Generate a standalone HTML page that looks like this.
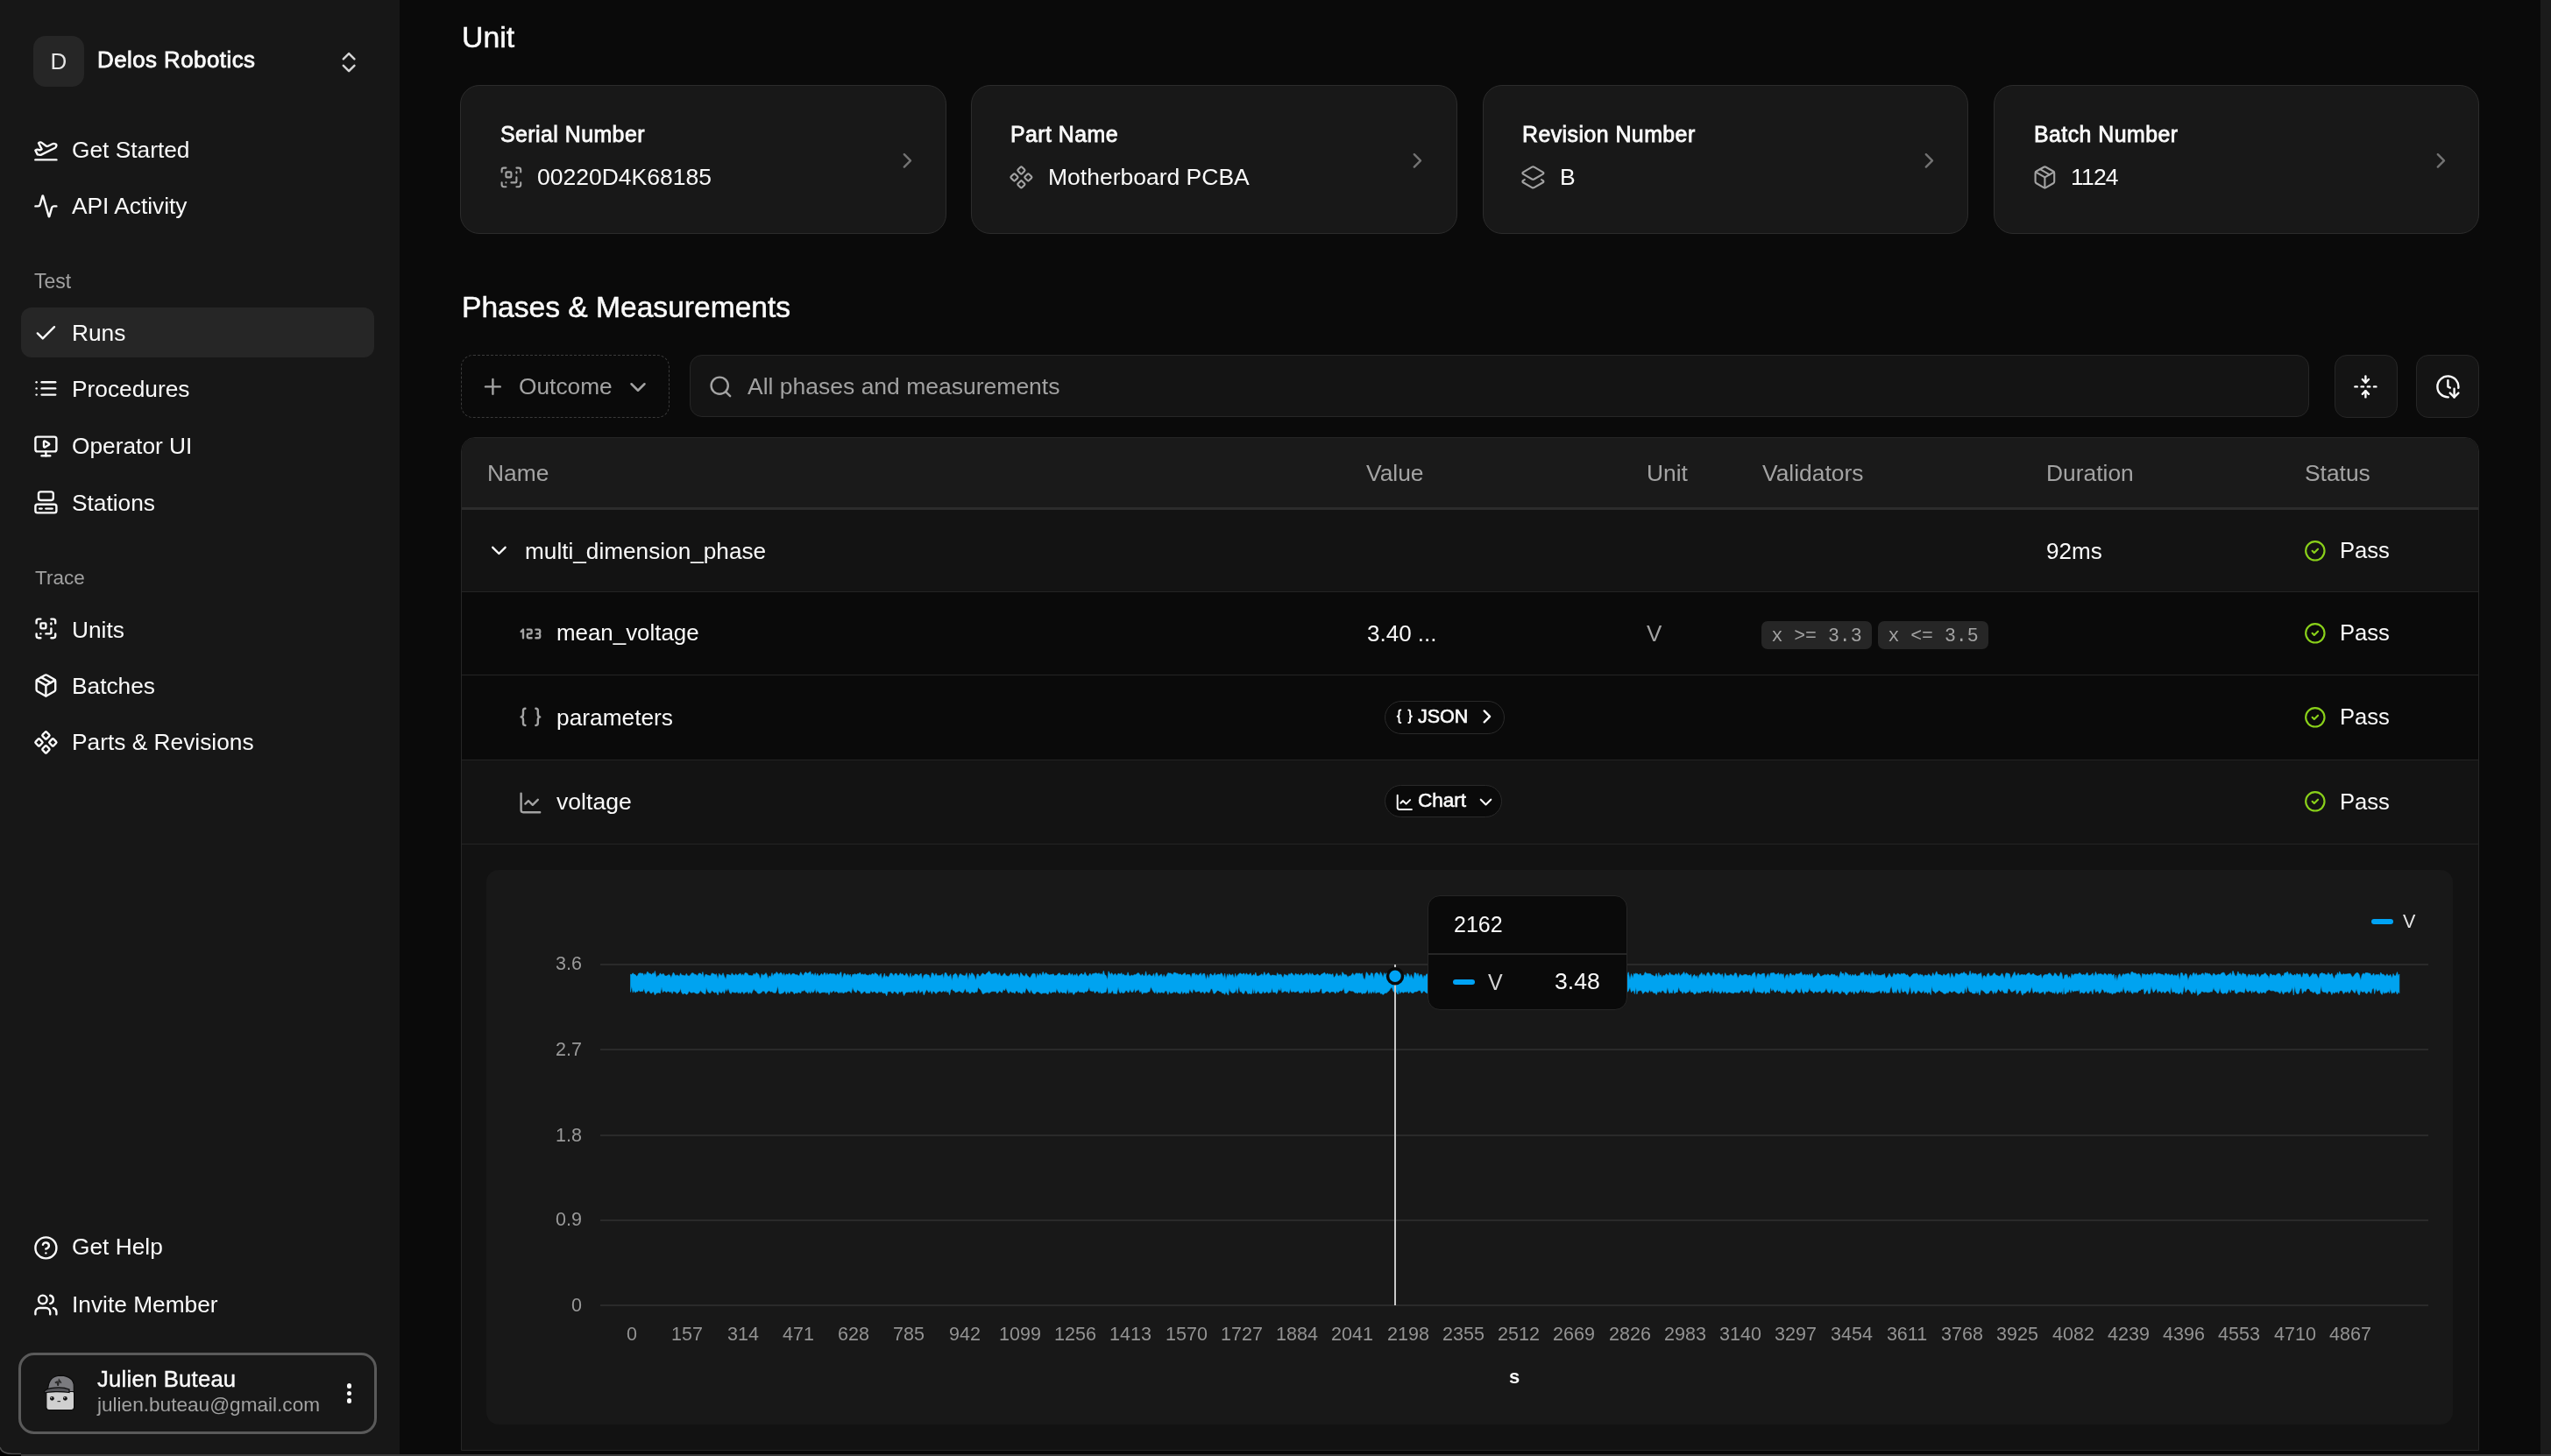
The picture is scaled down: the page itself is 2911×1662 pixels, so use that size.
<!DOCTYPE html><html><head><meta charset="utf-8"><style>
html,body{margin:0;padding:0;}
body{width:2911px;height:1662px;overflow:hidden;background:#0a0a0a;position:relative;font-family:"Liberation Sans", sans-serif;}
.t{position:absolute;white-space:nowrap;will-change:transform;}
.r{position:absolute;}
</style></head><body>
<div class="r" style="left:0.00px;top:0.00px;width:456.00px;height:1662.00px;background:#171717;border-radius:0px;box-sizing:border-box;"></div>
<div class="r" style="left:38.00px;top:41.00px;width:57.50px;height:57.50px;background:#262626;border-radius:14px;box-sizing:border-box;"></div>
<div class="t" style="left:-433.20px;width:1000px;text-align:center;top:56.89px;font-size:26px;line-height:26px;color:#e5e5e5;font-weight:400;letter-spacing:0px;font-family:'Liberation Sans', sans-serif;">D</div>
<div class="t" style="left:110.90px;top:56.38px;font-size:25.9px;line-height:25.9px;color:#fafafa;font-weight:400;letter-spacing:0.45px;font-family:'Liberation Sans', sans-serif;-webkit-text-stroke:0.8px #fafafa;">Delos Robotics</div>
<svg class="r" style="left:383.23px;top:55.63px;" width="30.24" height="30.24" viewBox="0 0 24 24" fill="none" stroke="#d4d4d4" stroke-width="2" stroke-linecap="round" stroke-linejoin="round"><path d="m7 15 5 5 5-5"/><path d="m7 9 5-5 5 5"/></svg>
<div class="t" style="left:81.90px;top:157.74px;font-size:26.3px;line-height:26.3px;color:#fafafa;font-weight:400;letter-spacing:0px;font-family:'Liberation Sans', sans-serif;">Get Started</div>
<svg class="r" style="left:38.10px;top:156.20px;" width="28.80" height="28.80" viewBox="0 0 24 24" fill="none" stroke="#fafafa" stroke-width="2" stroke-linecap="round" stroke-linejoin="round"><path d="M2 22h20"/><path d="M6.36 17.4 4 17l-2-4 1.1-.55a2 2 0 0 1 1.8 0l.17.1a2 2 0 0 0 1.8 0L8 12 5 6l.9-.45a2 2 0 0 1 2.09.2l4.02 3a2 2 0 0 0 2.1.2l4.19-2.06a2.41 2.41 0 0 1 1.73-.17L21 7a1.4 1.4 0 0 1 .87 1.99l-.38.76c-.23.46-.6.84-1.07 1.08L7.58 17.2a2 2 0 0 1-1.22.18Z"/></svg>
<div class="t" style="left:81.90px;top:222.34px;font-size:26.3px;line-height:26.3px;color:#fafafa;font-weight:400;letter-spacing:0px;font-family:'Liberation Sans', sans-serif;">API Activity</div>
<svg class="r" style="left:38.10px;top:221.25px;" width="28.80" height="28.80" viewBox="0 0 24 24" fill="none" stroke="#fafafa" stroke-width="2" stroke-linecap="round" stroke-linejoin="round"><path d="M22 12h-2.48a2 2 0 0 0-1.93 1.46l-2.35 8.36a.25.25 0 0 1-.48 0L9.24 2.18a.25.25 0 0 0-.48 0l-2.35 8.36A2 2 0 0 1 4.49 12H2"/></svg>
<div class="t" style="left:39.00px;top:310.33px;font-size:23px;line-height:23px;color:#a1a1a1;font-weight:400;letter-spacing:0px;font-family:'Liberation Sans', sans-serif;">Test</div>
<div class="r" style="left:24.00px;top:351.00px;width:403.00px;height:56.50px;background:#262626;border-radius:12px;box-sizing:border-box;"></div>
<div class="t" style="left:81.90px;top:366.54px;font-size:26.3px;line-height:26.3px;color:#fafafa;font-weight:400;letter-spacing:0px;font-family:'Liberation Sans', sans-serif;">Runs</div>
<svg class="r" style="left:38.10px;top:365.50px;" width="28.80" height="28.80" viewBox="0 0 24 24" fill="none" stroke="#fafafa" stroke-width="2" stroke-linecap="round" stroke-linejoin="round"><path d="M20 6 9 17l-5-5"/></svg>
<div class="t" style="left:81.90px;top:430.94px;font-size:26.3px;line-height:26.3px;color:#fafafa;font-weight:400;letter-spacing:0px;font-family:'Liberation Sans', sans-serif;">Procedures</div>
<svg class="r" style="left:38.10px;top:429.40px;" width="28.80" height="28.80" viewBox="0 0 24 24" fill="none" stroke="#fafafa" stroke-width="2" stroke-linecap="round" stroke-linejoin="round"><path d="M3 12h.01"/><path d="M3 18h.01"/><path d="M3 6h.01"/><path d="M8 12h13"/><path d="M8 18h13"/><path d="M8 6h13"/></svg>
<div class="t" style="left:81.90px;top:496.14px;font-size:26.3px;line-height:26.3px;color:#fafafa;font-weight:400;letter-spacing:0px;font-family:'Liberation Sans', sans-serif;">Operator UI</div>
<svg class="r" style="left:38.10px;top:494.90px;" width="28.80" height="28.80" viewBox="0 0 24 24" fill="none" stroke="#fafafa" stroke-width="2" stroke-linecap="round" stroke-linejoin="round"><path d="M10 7.75a.75.75 0 0 1 1.142-.638l3.664 2.249a.75.75 0 0 1 0 1.278l-3.664 2.25a.75.75 0 0 1-1.142-.64z"/><path d="M12 17v4"/><path d="M8 21h8"/><rect x="2" y="3" width="20" height="14" rx="2"/></svg>
<div class="t" style="left:81.90px;top:561.44px;font-size:26.3px;line-height:26.3px;color:#fafafa;font-weight:400;letter-spacing:0px;font-family:'Liberation Sans', sans-serif;">Stations</div>
<svg class="r" style="left:38.10px;top:559.15px;" width="28.80" height="28.80" viewBox="0 0 24 24" fill="none" stroke="#fafafa" stroke-width="2" stroke-linecap="round" stroke-linejoin="round"><rect width="14" height="8" x="5" y="2" rx="2"/><rect width="20" height="8" x="2" y="14" rx="2"/><path d="M6 18h2"/><path d="M12 18h6"/></svg>
<div class="t" style="left:39.50px;top:648.75px;font-size:22.5px;line-height:22.5px;color:#a1a1a1;font-weight:400;letter-spacing:0px;font-family:'Liberation Sans', sans-serif;">Trace</div>
<div class="t" style="left:81.90px;top:705.54px;font-size:26.3px;line-height:26.3px;color:#fafafa;font-weight:400;letter-spacing:0px;font-family:'Liberation Sans', sans-serif;">Units</div>
<svg class="r" style="left:38.10px;top:702.80px;" width="28.80" height="28.80" viewBox="0 0 24 24" fill="none" stroke="#fafafa" stroke-width="2" stroke-linecap="round" stroke-linejoin="round"><path d="M17 12v4a1 1 0 0 1-1 1h-4"/><path d="M17 3h2a2 2 0 0 1 2 2v2"/><path d="M17 8V7"/><path d="M21 17v2a2 2 0 0 1-2 2h-2"/><path d="M3 7V5a2 2 0 0 1 2-2h2"/><path d="M7 17h.01"/><path d="M7 21H5a2 2 0 0 1-2-2v-2"/><rect x="7" y="7" width="5" height="5" rx="1"/></svg>
<div class="t" style="left:81.90px;top:769.74px;font-size:26.3px;line-height:26.3px;color:#fafafa;font-weight:400;letter-spacing:0px;font-family:'Liberation Sans', sans-serif;">Batches</div>
<svg class="r" style="left:38.10px;top:767.90px;" width="28.80" height="28.80" viewBox="0 0 24 24" fill="none" stroke="#fafafa" stroke-width="2" stroke-linecap="round" stroke-linejoin="round"><path d="M11 21.73a2 2 0 0 0 2 0l7-4A2 2 0 0 0 21 16V8a2 2 0 0 0-1-1.73l-7-4a2 2 0 0 0-2 0l-7 4A2 2 0 0 0 3 8v8a2 2 0 0 0 1 1.73z"/><path d="M12 22V12"/><path d="M3.29 7 12 12l8.71-5"/><path d="m7.5 4.27 9 5.15"/></svg>
<div class="t" style="left:81.90px;top:834.34px;font-size:26.3px;line-height:26.3px;color:#fafafa;font-weight:400;letter-spacing:0px;font-family:'Liberation Sans', sans-serif;">Parts &amp; Revisions</div>
<svg class="r" style="left:38.10px;top:832.80px;" width="28.80" height="28.80" viewBox="0 0 24 24" fill="none" stroke="#fafafa" stroke-width="2" stroke-linecap="round" stroke-linejoin="round"><path d="M15.536 11.293a1 1 0 0 0 0 1.414l2.376 2.377a1 1 0 0 0 1.414 0l2.377-2.377a1 1 0 0 0 0-1.414l-2.377-2.377a1 1 0 0 0-1.414 0z"/><path d="M2.297 11.293a1 1 0 0 0 0 1.414l2.377 2.377a1 1 0 0 0 1.414 0l2.377-2.377a1 1 0 0 0 0-1.414L6.088 8.916a1 1 0 0 0-1.414 0z"/><path d="M8.916 17.912a1 1 0 0 0 0 1.415l2.377 2.376a1 1 0 0 0 1.414 0l2.377-2.376a1 1 0 0 0 0-1.415l-2.377-2.376a1 1 0 0 0-1.414 0z"/><path d="M8.916 4.674a1 1 0 0 0 0 1.414l2.377 2.376a1 1 0 0 0 1.414 0l2.377-2.376a1 1 0 0 0 0-1.414l-2.377-2.377a1 1 0 0 0-1.414 0z"/></svg>
<div class="t" style="left:81.90px;top:1410.24px;font-size:26.3px;line-height:26.3px;color:#fafafa;font-weight:400;letter-spacing:0px;font-family:'Liberation Sans', sans-serif;">Get Help</div>
<svg class="r" style="left:38.10px;top:1410.10px;" width="28.80" height="28.80" viewBox="0 0 24 24" fill="none" stroke="#fafafa" stroke-width="2" stroke-linecap="round" stroke-linejoin="round"><circle cx="12" cy="12" r="10"/><path d="M9.09 9a3 3 0 0 1 5.83 1c0 2-3 3-3 3"/><path d="M12 17h.01"/></svg>
<div class="t" style="left:81.90px;top:1475.54px;font-size:26.3px;line-height:26.3px;color:#fafafa;font-weight:400;letter-spacing:0px;font-family:'Liberation Sans', sans-serif;">Invite Member</div>
<svg class="r" style="left:38.10px;top:1475.10px;" width="28.80" height="28.80" viewBox="0 0 24 24" fill="none" stroke="#fafafa" stroke-width="2" stroke-linecap="round" stroke-linejoin="round"><path d="M16 21v-2a4 4 0 0 0-4-4H6a4 4 0 0 0-4 4v2"/><circle cx="9" cy="7" r="4"/><path d="M22 21v-2a4 4 0 0 0-3-3.87"/><path d="M16 3.13a4 4 0 0 1 0 7.75"/></svg>
<div class="r" style="left:21.00px;top:1544.00px;width:409.00px;height:92.50px;background:#171717;border-radius:18px;border:3.5px solid #5a5a5a;box-sizing:border-box;"></div>
<svg class="r" style="left:40px;top:1560px" width="60" height="60" viewBox="0 0 60 60">
<rect x="12.8" y="27.5" width="31.8" height="22" rx="3" fill="#d0d0d0" stroke="#0a0a0a" stroke-width="1.2"/>
<path d="M14.5 28.5 C14.5 15, 20 10.5, 29.5 10.2 C38.5 10.5, 44.3 15, 44.3 22 L44.3 28.5 Z" fill="#7b7b7f" stroke="#0a0a0a" stroke-width="1.2"/>
<path d="M10.5 28.3 C13 23.5, 31 22.5, 39 26 L39 29.5 C30 28, 16 28.3, 11 30 Z" fill="#56565a" stroke="#0a0a0a" stroke-width="1.2"/>
<path d="M22.8 18.5 l2.2 -1.2 l1.2 4.5 l1.2 -6.5 l2.4 3.5" stroke="#2a2a2a" stroke-width="1.6" fill="none"/>
<circle cx="19.4" cy="36.3" r="2.4" fill="#111"/><circle cx="34.4" cy="36.3" r="2.4" fill="#111"/>
<circle cx="18.8" cy="35.6" r="0.7" fill="#eee"/><circle cx="33.8" cy="35.6" r="0.7" fill="#eee"/>
<path d="M25.5 39.6h3.5" stroke="#333" stroke-width="1.2"/>
</svg>
<div class="t" style="left:111.00px;top:1561.93px;font-size:25.6px;line-height:25.6px;color:#fafafa;font-weight:400;letter-spacing:0.25px;font-family:'Liberation Sans', sans-serif;-webkit-text-stroke:0.4px #fafafa;">Julien Buteau</div>
<div class="t" style="left:111.00px;top:1593.37px;font-size:22.6px;line-height:22.6px;color:#a1a1a1;font-weight:400;letter-spacing:0px;font-family:'Liberation Sans', sans-serif;">julien.buteau@gmail.com</div>
<div class="r" style="left:395.50px;top:1579.40px;width:5.20px;height:5.20px;background:#fafafa;border-radius:3px;box-sizing:border-box;"></div>
<div class="r" style="left:395.50px;top:1587.90px;width:5.20px;height:5.20px;background:#fafafa;border-radius:3px;box-sizing:border-box;"></div>
<div class="r" style="left:395.50px;top:1596.40px;width:5.20px;height:5.20px;background:#fafafa;border-radius:3px;box-sizing:border-box;"></div>
<div class="r" style="left:2899.00px;top:0.00px;width:12.00px;height:1662.00px;background:#1b1b1b;border-radius:0px;box-sizing:border-box;"></div>
<div class="t" style="left:526.80px;top:26.29px;font-size:33.8px;line-height:33.8px;color:#fafafa;font-weight:400;letter-spacing:0px;font-family:'Liberation Sans', sans-serif;-webkit-text-stroke:0.5px #fafafa;">Unit</div>
<div class="r" style="left:525.40px;top:97.00px;width:554.60px;height:170.00px;background:#181818;border-radius:22px;border:1.2px solid #2c2c2c;box-sizing:border-box;"></div>
<div class="t" style="left:570.70px;top:141.42px;font-size:24.9px;line-height:24.9px;color:#fafafa;font-weight:400;letter-spacing:0.45px;font-family:'Liberation Sans', sans-serif;-webkit-text-stroke:0.8px #fafafa;">Serial Number</div>
<svg class="r" style="left:568.80px;top:187.80px;" width="28.80" height="28.80" viewBox="0 0 24 24" fill="none" stroke="#a3a3a3" stroke-width="1.75" stroke-linecap="round" stroke-linejoin="round"><path d="M17 12v4a1 1 0 0 1-1 1h-4"/><path d="M17 3h2a2 2 0 0 1 2 2v2"/><path d="M17 8V7"/><path d="M21 17v2a2 2 0 0 1-2 2h-2"/><path d="M3 7V5a2 2 0 0 1 2-2h2"/><path d="M7 17h.01"/><path d="M7 21H5a2 2 0 0 1-2-2v-2"/><rect x="7" y="7" width="5" height="5" rx="1"/></svg>
<div class="t" style="left:613.40px;top:188.87px;font-size:26.5px;line-height:26.5px;color:#fafafa;font-weight:400;letter-spacing:0px;font-family:'Liberation Sans', sans-serif;">00220D4K68185</div>
<svg class="r" style="left:1020.85px;top:168.60px;" width="28.80" height="28.80" viewBox="0 0 24 24" fill="none" stroke="#737373" stroke-width="2" stroke-linecap="round" stroke-linejoin="round"><path d="m9 18 6-6-6-6"/></svg>
<div class="r" style="left:1107.80px;top:97.00px;width:555.20px;height:170.00px;background:#181818;border-radius:22px;border:1.2px solid #2c2c2c;box-sizing:border-box;"></div>
<div class="t" style="left:1153.10px;top:141.42px;font-size:24.9px;line-height:24.9px;color:#fafafa;font-weight:400;letter-spacing:0.45px;font-family:'Liberation Sans', sans-serif;-webkit-text-stroke:0.8px #fafafa;">Part Name</div>
<svg class="r" style="left:1151.20px;top:187.80px;" width="28.80" height="28.80" viewBox="0 0 24 24" fill="none" stroke="#a3a3a3" stroke-width="1.75" stroke-linecap="round" stroke-linejoin="round"><path d="M15.536 11.293a1 1 0 0 0 0 1.414l2.376 2.377a1 1 0 0 0 1.414 0l2.377-2.377a1 1 0 0 0 0-1.414l-2.377-2.377a1 1 0 0 0-1.414 0z"/><path d="M2.297 11.293a1 1 0 0 0 0 1.414l2.377 2.377a1 1 0 0 0 1.414 0l2.377-2.377a1 1 0 0 0 0-1.414L6.088 8.916a1 1 0 0 0-1.414 0z"/><path d="M8.916 17.912a1 1 0 0 0 0 1.415l2.377 2.376a1 1 0 0 0 1.414 0l2.377-2.376a1 1 0 0 0 0-1.415l-2.377-2.376a1 1 0 0 0-1.414 0z"/><path d="M8.916 4.674a1 1 0 0 0 0 1.414l2.377 2.376a1 1 0 0 0 1.414 0l2.377-2.376a1 1 0 0 0 0-1.414l-2.377-2.377a1 1 0 0 0-1.414 0z"/></svg>
<div class="t" style="left:1195.80px;top:188.87px;font-size:26.5px;line-height:26.5px;color:#fafafa;font-weight:400;letter-spacing:0px;font-family:'Liberation Sans', sans-serif;">Motherboard PCBA</div>
<svg class="r" style="left:1603.25px;top:168.60px;" width="28.80" height="28.80" viewBox="0 0 24 24" fill="none" stroke="#737373" stroke-width="2" stroke-linecap="round" stroke-linejoin="round"><path d="m9 18 6-6-6-6"/></svg>
<div class="r" style="left:1692.00px;top:97.00px;width:553.50px;height:170.00px;background:#181818;border-radius:22px;border:1.2px solid #2c2c2c;box-sizing:border-box;"></div>
<div class="t" style="left:1737.30px;top:141.42px;font-size:24.9px;line-height:24.9px;color:#fafafa;font-weight:400;letter-spacing:0.45px;font-family:'Liberation Sans', sans-serif;-webkit-text-stroke:0.8px #fafafa;">Revision Number</div>
<svg class="r" style="left:1735.40px;top:187.80px;" width="28.80" height="28.80" viewBox="0 0 24 24" fill="none" stroke="#a3a3a3" stroke-width="1.75" stroke-linecap="round" stroke-linejoin="round"><path d="M13 13.74a2 2 0 0 1-2 0L2.5 8.87a1 1 0 0 1 0-1.74L11 2.26a2 2 0 0 1 2 0l8.5 4.87a1 1 0 0 1 0 1.74z"/><path d="m20 14.285 1.5.845a1 1 0 0 1 0 1.74L13 21.74a2 2 0 0 1-2 0l-8.5-4.87a1 1 0 0 1 0-1.74l1.5-.845"/></svg>
<div class="t" style="left:1780.00px;top:188.87px;font-size:26.5px;line-height:26.5px;color:#fafafa;font-weight:400;letter-spacing:0px;font-family:'Liberation Sans', sans-serif;">B</div>
<svg class="r" style="left:2187.45px;top:168.60px;" width="28.80" height="28.80" viewBox="0 0 24 24" fill="none" stroke="#737373" stroke-width="2" stroke-linecap="round" stroke-linejoin="round"><path d="m9 18 6-6-6-6"/></svg>
<div class="r" style="left:2275.30px;top:97.00px;width:553.30px;height:170.00px;background:#181818;border-radius:22px;border:1.2px solid #2c2c2c;box-sizing:border-box;"></div>
<div class="t" style="left:2320.60px;top:141.42px;font-size:24.9px;line-height:24.9px;color:#fafafa;font-weight:400;letter-spacing:0.45px;font-family:'Liberation Sans', sans-serif;-webkit-text-stroke:0.8px #fafafa;">Batch Number</div>
<svg class="r" style="left:2318.70px;top:187.80px;" width="28.80" height="28.80" viewBox="0 0 24 24" fill="none" stroke="#a3a3a3" stroke-width="1.75" stroke-linecap="round" stroke-linejoin="round"><path d="M11 21.73a2 2 0 0 0 2 0l7-4A2 2 0 0 0 21 16V8a2 2 0 0 0-1-1.73l-7-4a2 2 0 0 0-2 0l-7 4A2 2 0 0 0 3 8v8a2 2 0 0 0 1 1.73z"/><path d="M12 22V12"/><path d="M3.29 7 12 12l8.71-5"/><path d="m7.5 4.27 9 5.15"/></svg>
<div class="t" style="left:2363.30px;top:188.87px;font-size:26.5px;line-height:26.5px;color:#fafafa;font-weight:400;letter-spacing:-0.8px;font-family:'Liberation Sans', sans-serif;">1124</div>
<svg class="r" style="left:2770.75px;top:168.60px;" width="28.80" height="28.80" viewBox="0 0 24 24" fill="none" stroke="#737373" stroke-width="2" stroke-linecap="round" stroke-linejoin="round"><path d="m9 18 6-6-6-6"/></svg>
<div class="t" style="left:526.70px;top:334.26px;font-size:33.6px;line-height:33.6px;color:#fafafa;font-weight:400;letter-spacing:0px;font-family:'Liberation Sans', sans-serif;-webkit-text-stroke:0.5px #fafafa;">Phases &amp; Measurements</div>
<div class="r" style="left:525.70px;top:405.40px;width:238.60px;height:71.60px;background:#0a0a0a;border-radius:14px;border:1px dashed #3a3a3a;box-sizing:border-box;"></div>
<svg class="r" style="left:547.95px;top:427.30px;" width="28.80" height="28.80" viewBox="0 0 24 24" fill="none" stroke="#a3a3a3" stroke-width="2" stroke-linecap="round" stroke-linejoin="round"><path d="M5 12h14"/><path d="M12 5v14"/></svg>
<div class="t" style="left:591.90px;top:428.24px;font-size:26.3px;line-height:26.3px;color:#a3a3a3;font-weight:400;letter-spacing:0px;font-family:'Liberation Sans', sans-serif;">Outcome</div>
<svg class="r" style="left:713.45px;top:426.90px;" width="30.00" height="30.00" viewBox="0 0 24 24" fill="none" stroke="#a3a3a3" stroke-width="2" stroke-linecap="round" stroke-linejoin="round"><path d="m6 9 6 6 6-6"/></svg>
<div class="r" style="left:787.00px;top:405.40px;width:1847.50px;height:71.10px;background:#141414;border-radius:14px;border:1.5px solid #262626;box-sizing:border-box;"></div>
<svg class="r" style="left:807.95px;top:426.85px;" width="28.80" height="28.80" viewBox="0 0 24 24" fill="none" stroke="#a3a3a3" stroke-width="2" stroke-linecap="round" stroke-linejoin="round"><circle cx="11" cy="11" r="8"/><path d="m21 21-4.3-4.3"/></svg>
<div class="t" style="left:853.40px;top:428.07px;font-size:26.5px;line-height:26.5px;color:#a1a1a1;font-weight:400;letter-spacing:0px;font-family:'Liberation Sans', sans-serif;">All phases and measurements</div>
<div class="r" style="left:2664.30px;top:405.20px;width:71.30px;height:71.40px;background:#141414;border-radius:14px;border:1.5px solid #262626;box-sizing:border-box;"></div>
<div class="r" style="left:2757.30px;top:405.20px;width:71.30px;height:71.40px;background:#141414;border-radius:14px;border:1.5px solid #262626;box-sizing:border-box;"></div>
<svg class="r" style="left:2684.95px;top:426.95px;" width="28.80" height="28.80" viewBox="0 0 24 24" fill="none" stroke="#fafafa" stroke-width="2" stroke-linecap="round" stroke-linejoin="round"><path d="M12 22v-6"/><path d="M12 8V2"/><path d="M4 12H2"/><path d="M10 12H8"/><path d="M16 12h-2"/><path d="M22 12h-2"/><path d="m15 19-3-3-3 3"/><path d="m15 5-3 3-3-3"/></svg>
<svg class="r" style="left:2779.10px;top:427.00px;" width="28.80" height="28.80" viewBox="0 0 24 24" fill="none" stroke="#fafafa" stroke-width="2" stroke-linecap="round" stroke-linejoin="round"><path d="M12 6v6l2 1"/><path d="M12.337 21.994a10 10 0 1 1 9.588-8.767"/><path d="m14 18 4 4 4-4"/><path d="M18 14v8"/></svg>
<div class="r" style="left:525.50px;top:499.00px;width:2303.50px;height:1157.00px;background:#0a0a0a;border-radius:16px;border:1.5px solid #262626;box-sizing:border-box;border-bottom-left-radius:0;border-bottom-right-radius:0;overflow:hidden;"></div>
<div class="r" style="left:526.50px;top:500.00px;width:2301.50px;height:80.00px;background:#1a1a1a;border-radius:15px;box-sizing:border-box;border-bottom-left-radius:0;border-bottom-right-radius:0;"></div>
<div class="r" style="left:526.50px;top:579.30px;width:2301.50px;height:2.40px;background:#2c2c2c;border-radius:0px;box-sizing:border-box;"></div>
<div class="t" style="left:555.80px;top:526.65px;font-size:26.4px;line-height:26.4px;color:#a3a3a3;font-weight:400;letter-spacing:0px;font-family:'Liberation Sans', sans-serif;">Name</div>
<div class="t" style="left:1559.30px;top:526.65px;font-size:26.4px;line-height:26.4px;color:#a3a3a3;font-weight:400;letter-spacing:0px;font-family:'Liberation Sans', sans-serif;">Value</div>
<div class="t" style="left:1878.60px;top:526.65px;font-size:26.4px;line-height:26.4px;color:#a3a3a3;font-weight:400;letter-spacing:0px;font-family:'Liberation Sans', sans-serif;">Unit</div>
<div class="t" style="left:2011.30px;top:526.65px;font-size:26.4px;line-height:26.4px;color:#a3a3a3;font-weight:400;letter-spacing:0px;font-family:'Liberation Sans', sans-serif;">Validators</div>
<div class="t" style="left:2334.90px;top:526.65px;font-size:26.4px;line-height:26.4px;color:#a3a3a3;font-weight:400;letter-spacing:0px;font-family:'Liberation Sans', sans-serif;">Duration</div>
<div class="t" style="left:2630.20px;top:526.65px;font-size:26.4px;line-height:26.4px;color:#a3a3a3;font-weight:400;letter-spacing:0px;font-family:'Liberation Sans', sans-serif;">Status</div>
<div class="r" style="left:527.00px;top:581.70px;width:2300.50px;height:93.60px;background:#131313;border-radius:0px;box-sizing:border-box;"></div>
<div class="r" style="left:527.00px;top:675.30px;width:2300.50px;height:95.00px;background:#0a0a0a;border-radius:0px;box-sizing:border-box;"></div>
<div class="r" style="left:527.00px;top:770.30px;width:2300.50px;height:96.90px;background:#0a0a0a;border-radius:0px;box-sizing:border-box;"></div>
<div class="r" style="left:527.00px;top:867.20px;width:2300.50px;height:96.30px;background:#131313;border-radius:0px;box-sizing:border-box;"></div>
<div class="r" style="left:527.00px;top:963.50px;width:2300.50px;height:691.50px;background:#121212;border-radius:0px;box-sizing:border-box;"></div>
<div class="r" style="left:527.00px;top:674.80px;width:2300.50px;height:1.20px;background:#242424;border-radius:0px;box-sizing:border-box;"></div>
<div class="r" style="left:527.00px;top:769.80px;width:2300.50px;height:1.20px;background:#242424;border-radius:0px;box-sizing:border-box;"></div>
<div class="r" style="left:527.00px;top:866.70px;width:2300.50px;height:1.20px;background:#242424;border-radius:0px;box-sizing:border-box;"></div>
<div class="r" style="left:527.00px;top:963.00px;width:2300.50px;height:1.20px;background:#242424;border-radius:0px;box-sizing:border-box;"></div>
<svg class="r" style="left:555.05px;top:614.25px;" width="28.80" height="28.80" viewBox="0 0 24 24" fill="none" stroke="#fafafa" stroke-width="2" stroke-linecap="round" stroke-linejoin="round"><path d="m6 9 6 6 6-6"/></svg>
<div class="t" style="left:599.10px;top:615.92px;font-size:26.2px;line-height:26.2px;color:#fafafa;font-weight:400;letter-spacing:0px;font-family:'Liberation Sans', sans-serif;">multi_dimension_phase</div>
<div class="t" style="left:2334.90px;top:615.91px;font-size:26.1px;line-height:26.1px;color:#fafafa;font-weight:400;letter-spacing:0px;font-family:'Liberation Sans', sans-serif;">92ms</div>
<svg class="r" style="left:2628.66px;top:615.96px;" width="25.68" height="25.68" viewBox="0 0 24 24" fill="none" stroke="#8ad11a" stroke-width="2" stroke-linecap="round" stroke-linejoin="round"><circle cx="12" cy="12" r="10"/><path d="m9 12 2 2 4-4"/></svg>
<div class="t" style="left:2669.80px;top:616.43px;font-size:25.6px;line-height:25.6px;color:#fafafa;font-weight:400;letter-spacing:0px;font-family:'Liberation Sans', sans-serif;">Pass</div>
<svg class="r" style="left:591.15px;top:709.00px;" width="28.80" height="28.80" viewBox="0 0 24 24" fill="none" stroke="#a3a3a3" stroke-width="2" stroke-linecap="round" stroke-linejoin="round"><path d="M3 10l2 -2v8"/><path d="M9 8h3a1 1 0 0 1 1 1v2a1 1 0 0 1 -1 1h-2a1 1 0 0 0 -1 1v2a1 1 0 0 0 1 1h3"/><path d="M17 8h2.5a1.5 1.5 0 0 1 1.5 1.5v1a1.5 1.5 0 0 1 -1.5 1.5h-1.5h1.5a1.5 1.5 0 0 1 1.5 1.5v1a1.5 1.5 0 0 1 -1.5 1.5h-2.5"/></svg>
<div class="t" style="left:635.40px;top:710.08px;font-size:25.9px;line-height:25.9px;color:#fafafa;font-weight:400;letter-spacing:0px;font-family:'Liberation Sans', sans-serif;">mean_voltage</div>
<div class="t" style="left:1559.80px;top:710.09px;font-size:26px;line-height:26px;color:#fafafa;font-weight:400;letter-spacing:0px;font-family:'Liberation Sans', sans-serif;">3.40 ...</div>
<div class="t" style="left:1879.00px;top:710.09px;font-size:26px;line-height:26px;color:#a3a3a3;font-weight:400;letter-spacing:0px;font-family:'Liberation Sans', sans-serif;">V</div>
<div class="r" style="left:2009.80px;top:709.20px;width:126.00px;height:31.70px;background:#262626;border-radius:7px;box-sizing:border-box;"></div>
<div class="t" style="left:1572.80px;width:1000px;text-align:center;top:716.00px;font-size:21.5px;line-height:21.5px;color:#a3a3a3;font-weight:400;letter-spacing:0px;font-family:'Liberation Mono', monospace;">x &gt;= 3.3</div>
<div class="r" style="left:2143.00px;top:709.20px;width:125.80px;height:31.70px;background:#262626;border-radius:7px;box-sizing:border-box;"></div>
<div class="t" style="left:1705.90px;width:1000px;text-align:center;top:716.00px;font-size:21.5px;line-height:21.5px;color:#a3a3a3;font-weight:400;letter-spacing:0px;font-family:'Liberation Mono', monospace;">x &lt;= 3.5</div>
<svg class="r" style="left:2628.66px;top:709.96px;" width="25.68" height="25.68" viewBox="0 0 24 24" fill="none" stroke="#8ad11a" stroke-width="2" stroke-linecap="round" stroke-linejoin="round"><circle cx="12" cy="12" r="10"/><path d="m9 12 2 2 4-4"/></svg>
<div class="t" style="left:2669.80px;top:710.43px;font-size:25.6px;line-height:25.6px;color:#fafafa;font-weight:400;letter-spacing:0px;font-family:'Liberation Sans', sans-serif;">Pass</div>
<svg class="r" style="left:591.10px;top:804.10px;" width="28.80" height="28.80" viewBox="0 0 24 24" fill="none" stroke="#a3a3a3" stroke-width="2" stroke-linecap="round" stroke-linejoin="round"><path d="M7 4a2 2 0 0 0 -2 2v3a2 3 0 0 1 -2 3a2 3 0 0 1 2 3v3a2 2 0 0 0 2 2"/><path d="M17 4a2 2 0 0 1 2 2v3a2 3 0 0 0 2 3a2 3 0 0 0 -2 3v3a2 2 0 0 1 -2 2"/></svg>
<div class="t" style="left:635.40px;top:805.74px;font-size:26.3px;line-height:26.3px;color:#fafafa;font-weight:400;letter-spacing:0px;font-family:'Liberation Sans', sans-serif;">parameters</div>
<div class="r" style="left:1580.20px;top:800.10px;width:136.40px;height:37.70px;background:#0a0a0a;border-radius:19px;border:1.5px solid #2a2a2a;box-sizing:border-box;"></div>
<svg class="r" style="left:1592.10px;top:807.20px;" width="21.60" height="21.60" viewBox="0 0 24 24" fill="none" stroke="#fafafa" stroke-width="2.2" stroke-linecap="round" stroke-linejoin="round"><path d="M7 4a2 2 0 0 0 -2 2v3a2 3 0 0 1 -2 3a2 3 0 0 1 2 3v3a2 2 0 0 0 2 2"/><path d="M17 4a2 2 0 0 1 2 2v3a2 3 0 0 0 2 3a2 3 0 0 0 -2 3v3a2 2 0 0 1 -2 2"/></svg>
<div class="t" style="left:1618.40px;top:807.60px;font-size:21.5px;line-height:21.5px;color:#fafafa;font-weight:400;letter-spacing:0px;font-family:'Liberation Sans', sans-serif;-webkit-text-stroke:0.6px #fafafa;">JSON</div>
<svg class="r" style="left:1683.80px;top:805.10px;" width="25.80" height="25.80" viewBox="0 0 24 24" fill="none" stroke="#fafafa" stroke-width="2.2" stroke-linecap="round" stroke-linejoin="round"><path d="m9 18 6-6-6-6"/></svg>
<svg class="r" style="left:2628.66px;top:805.96px;" width="25.68" height="25.68" viewBox="0 0 24 24" fill="none" stroke="#8ad11a" stroke-width="2" stroke-linecap="round" stroke-linejoin="round"><circle cx="12" cy="12" r="10"/><path d="m9 12 2 2 4-4"/></svg>
<div class="t" style="left:2669.80px;top:806.33px;font-size:25.6px;line-height:25.6px;color:#fafafa;font-weight:400;letter-spacing:0px;font-family:'Liberation Sans', sans-serif;">Pass</div>
<svg class="r" style="left:590.80px;top:901.60px;" width="28.80" height="28.80" viewBox="0 0 24 24" fill="none" stroke="#a3a3a3" stroke-width="2" stroke-linecap="round" stroke-linejoin="round"><path d="M3 3v16a2 2 0 0 0 2 2h16"/><path d="m19 9-5 5-4-4-3 3"/></svg>
<div class="t" style="left:635.40px;top:901.88px;font-size:26.6px;line-height:26.6px;color:#fafafa;font-weight:400;letter-spacing:0px;font-family:'Liberation Sans', sans-serif;">voltage</div>
<div class="r" style="left:1580.20px;top:895.80px;width:134.20px;height:37.60px;background:#0a0a0a;border-radius:19px;border:1.5px solid #2a2a2a;box-sizing:border-box;"></div>
<svg class="r" style="left:1591.80px;top:905.20px;" width="21.60" height="21.60" viewBox="0 0 24 24" fill="none" stroke="#fafafa" stroke-width="2.2" stroke-linecap="round" stroke-linejoin="round"><path d="M3 3v16a2 2 0 0 0 2 2h16"/><path d="m19 9-5 5-4-4-3 3"/></svg>
<div class="t" style="left:1617.80px;top:903.35px;font-size:22.5px;line-height:22.5px;color:#fafafa;font-weight:400;letter-spacing:0px;font-family:'Liberation Sans', sans-serif;-webkit-text-stroke:0.6px #fafafa;">Chart</div>
<svg class="r" style="left:1683.58px;top:904.48px;" width="23.04" height="23.04" viewBox="0 0 24 24" fill="none" stroke="#fafafa" stroke-width="2.2" stroke-linecap="round" stroke-linejoin="round"><path d="m6 9 6 6 6-6"/></svg>
<svg class="r" style="left:2628.66px;top:901.96px;" width="25.68" height="25.68" viewBox="0 0 24 24" fill="none" stroke="#8ad11a" stroke-width="2" stroke-linecap="round" stroke-linejoin="round"><circle cx="12" cy="12" r="10"/><path d="m9 12 2 2 4-4"/></svg>
<div class="t" style="left:2669.80px;top:902.73px;font-size:25.6px;line-height:25.6px;color:#fafafa;font-weight:400;letter-spacing:0px;font-family:'Liberation Sans', sans-serif;">Pass</div>
<div class="r" style="left:555.40px;top:993.00px;width:2243.60px;height:633.00px;background:#181818;border-radius:14px;box-sizing:border-box;"></div>
<div class="r" style="left:685.00px;top:1100.00px;width:2085.50px;height:2.00px;background:#2a2a2a;border-radius:0px;box-sizing:border-box;"></div>
<div class="t" style="right:2247.00px;top:1090.40px;font-size:21.5px;line-height:21.5px;color:#9a9a9a;font-weight:400;letter-spacing:0px;font-family:'Liberation Sans', sans-serif;">3.6</div>
<div class="r" style="left:685.00px;top:1197.20px;width:2085.50px;height:2.00px;background:#2a2a2a;border-radius:0px;box-sizing:border-box;"></div>
<div class="t" style="right:2247.00px;top:1187.80px;font-size:21.5px;line-height:21.5px;color:#9a9a9a;font-weight:400;letter-spacing:0px;font-family:'Liberation Sans', sans-serif;">2.7</div>
<div class="r" style="left:685.00px;top:1294.90px;width:2085.50px;height:2.00px;background:#2a2a2a;border-radius:0px;box-sizing:border-box;"></div>
<div class="t" style="right:2247.00px;top:1285.60px;font-size:21.5px;line-height:21.5px;color:#9a9a9a;font-weight:400;letter-spacing:0px;font-family:'Liberation Sans', sans-serif;">1.8</div>
<div class="r" style="left:685.00px;top:1391.90px;width:2085.50px;height:2.00px;background:#2a2a2a;border-radius:0px;box-sizing:border-box;"></div>
<div class="t" style="right:2247.00px;top:1381.80px;font-size:21.5px;line-height:21.5px;color:#9a9a9a;font-weight:400;letter-spacing:0px;font-family:'Liberation Sans', sans-serif;">0.9</div>
<div class="r" style="left:685.00px;top:1489.00px;width:2085.50px;height:2.00px;background:#2a2a2a;border-radius:0px;box-sizing:border-box;"></div>
<div class="t" style="right:2247.00px;top:1479.50px;font-size:21.5px;line-height:21.5px;color:#9a9a9a;font-weight:400;letter-spacing:0px;font-family:'Liberation Sans', sans-serif;">0</div>
<div class="t" style="left:221.00px;width:1000px;text-align:center;top:1512.80px;font-size:21.5px;line-height:21.5px;color:#939393;font-weight:400;letter-spacing:0px;font-family:'Liberation Sans', sans-serif;">0</div>
<div class="t" style="left:284.25px;width:1000px;text-align:center;top:1512.80px;font-size:21.5px;line-height:21.5px;color:#939393;font-weight:400;letter-spacing:0px;font-family:'Liberation Sans', sans-serif;">157</div>
<div class="t" style="left:347.50px;width:1000px;text-align:center;top:1512.80px;font-size:21.5px;line-height:21.5px;color:#939393;font-weight:400;letter-spacing:0px;font-family:'Liberation Sans', sans-serif;">314</div>
<div class="t" style="left:410.75px;width:1000px;text-align:center;top:1512.80px;font-size:21.5px;line-height:21.5px;color:#939393;font-weight:400;letter-spacing:0px;font-family:'Liberation Sans', sans-serif;">471</div>
<div class="t" style="left:474.00px;width:1000px;text-align:center;top:1512.80px;font-size:21.5px;line-height:21.5px;color:#939393;font-weight:400;letter-spacing:0px;font-family:'Liberation Sans', sans-serif;">628</div>
<div class="t" style="left:537.25px;width:1000px;text-align:center;top:1512.80px;font-size:21.5px;line-height:21.5px;color:#939393;font-weight:400;letter-spacing:0px;font-family:'Liberation Sans', sans-serif;">785</div>
<div class="t" style="left:600.50px;width:1000px;text-align:center;top:1512.80px;font-size:21.5px;line-height:21.5px;color:#939393;font-weight:400;letter-spacing:0px;font-family:'Liberation Sans', sans-serif;">942</div>
<div class="t" style="left:663.75px;width:1000px;text-align:center;top:1512.80px;font-size:21.5px;line-height:21.5px;color:#939393;font-weight:400;letter-spacing:0px;font-family:'Liberation Sans', sans-serif;">1099</div>
<div class="t" style="left:727.00px;width:1000px;text-align:center;top:1512.80px;font-size:21.5px;line-height:21.5px;color:#939393;font-weight:400;letter-spacing:0px;font-family:'Liberation Sans', sans-serif;">1256</div>
<div class="t" style="left:790.25px;width:1000px;text-align:center;top:1512.80px;font-size:21.5px;line-height:21.5px;color:#939393;font-weight:400;letter-spacing:0px;font-family:'Liberation Sans', sans-serif;">1413</div>
<div class="t" style="left:853.50px;width:1000px;text-align:center;top:1512.80px;font-size:21.5px;line-height:21.5px;color:#939393;font-weight:400;letter-spacing:0px;font-family:'Liberation Sans', sans-serif;">1570</div>
<div class="t" style="left:916.75px;width:1000px;text-align:center;top:1512.80px;font-size:21.5px;line-height:21.5px;color:#939393;font-weight:400;letter-spacing:0px;font-family:'Liberation Sans', sans-serif;">1727</div>
<div class="t" style="left:980.00px;width:1000px;text-align:center;top:1512.80px;font-size:21.5px;line-height:21.5px;color:#939393;font-weight:400;letter-spacing:0px;font-family:'Liberation Sans', sans-serif;">1884</div>
<div class="t" style="left:1043.25px;width:1000px;text-align:center;top:1512.80px;font-size:21.5px;line-height:21.5px;color:#939393;font-weight:400;letter-spacing:0px;font-family:'Liberation Sans', sans-serif;">2041</div>
<div class="t" style="left:1106.50px;width:1000px;text-align:center;top:1512.80px;font-size:21.5px;line-height:21.5px;color:#939393;font-weight:400;letter-spacing:0px;font-family:'Liberation Sans', sans-serif;">2198</div>
<div class="t" style="left:1169.75px;width:1000px;text-align:center;top:1512.80px;font-size:21.5px;line-height:21.5px;color:#939393;font-weight:400;letter-spacing:0px;font-family:'Liberation Sans', sans-serif;">2355</div>
<div class="t" style="left:1233.00px;width:1000px;text-align:center;top:1512.80px;font-size:21.5px;line-height:21.5px;color:#939393;font-weight:400;letter-spacing:0px;font-family:'Liberation Sans', sans-serif;">2512</div>
<div class="t" style="left:1296.25px;width:1000px;text-align:center;top:1512.80px;font-size:21.5px;line-height:21.5px;color:#939393;font-weight:400;letter-spacing:0px;font-family:'Liberation Sans', sans-serif;">2669</div>
<div class="t" style="left:1359.50px;width:1000px;text-align:center;top:1512.80px;font-size:21.5px;line-height:21.5px;color:#939393;font-weight:400;letter-spacing:0px;font-family:'Liberation Sans', sans-serif;">2826</div>
<div class="t" style="left:1422.75px;width:1000px;text-align:center;top:1512.80px;font-size:21.5px;line-height:21.5px;color:#939393;font-weight:400;letter-spacing:0px;font-family:'Liberation Sans', sans-serif;">2983</div>
<div class="t" style="left:1486.00px;width:1000px;text-align:center;top:1512.80px;font-size:21.5px;line-height:21.5px;color:#939393;font-weight:400;letter-spacing:0px;font-family:'Liberation Sans', sans-serif;">3140</div>
<div class="t" style="left:1549.25px;width:1000px;text-align:center;top:1512.80px;font-size:21.5px;line-height:21.5px;color:#939393;font-weight:400;letter-spacing:0px;font-family:'Liberation Sans', sans-serif;">3297</div>
<div class="t" style="left:1612.50px;width:1000px;text-align:center;top:1512.80px;font-size:21.5px;line-height:21.5px;color:#939393;font-weight:400;letter-spacing:0px;font-family:'Liberation Sans', sans-serif;">3454</div>
<div class="t" style="left:1675.75px;width:1000px;text-align:center;top:1512.80px;font-size:21.5px;line-height:21.5px;color:#939393;font-weight:400;letter-spacing:0px;font-family:'Liberation Sans', sans-serif;">3611</div>
<div class="t" style="left:1739.00px;width:1000px;text-align:center;top:1512.80px;font-size:21.5px;line-height:21.5px;color:#939393;font-weight:400;letter-spacing:0px;font-family:'Liberation Sans', sans-serif;">3768</div>
<div class="t" style="left:1802.25px;width:1000px;text-align:center;top:1512.80px;font-size:21.5px;line-height:21.5px;color:#939393;font-weight:400;letter-spacing:0px;font-family:'Liberation Sans', sans-serif;">3925</div>
<div class="t" style="left:1865.50px;width:1000px;text-align:center;top:1512.80px;font-size:21.5px;line-height:21.5px;color:#939393;font-weight:400;letter-spacing:0px;font-family:'Liberation Sans', sans-serif;">4082</div>
<div class="t" style="left:1928.75px;width:1000px;text-align:center;top:1512.80px;font-size:21.5px;line-height:21.5px;color:#939393;font-weight:400;letter-spacing:0px;font-family:'Liberation Sans', sans-serif;">4239</div>
<div class="t" style="left:1992.00px;width:1000px;text-align:center;top:1512.80px;font-size:21.5px;line-height:21.5px;color:#939393;font-weight:400;letter-spacing:0px;font-family:'Liberation Sans', sans-serif;">4396</div>
<div class="t" style="left:2055.25px;width:1000px;text-align:center;top:1512.80px;font-size:21.5px;line-height:21.5px;color:#939393;font-weight:400;letter-spacing:0px;font-family:'Liberation Sans', sans-serif;">4553</div>
<div class="t" style="left:2118.50px;width:1000px;text-align:center;top:1512.80px;font-size:21.5px;line-height:21.5px;color:#939393;font-weight:400;letter-spacing:0px;font-family:'Liberation Sans', sans-serif;">4710</div>
<div class="t" style="left:2181.75px;width:1000px;text-align:center;top:1512.80px;font-size:21.5px;line-height:21.5px;color:#939393;font-weight:400;letter-spacing:0px;font-family:'Liberation Sans', sans-serif;">4867</div>
<div class="t" style="left:1227.80px;width:1000px;text-align:center;top:1561.38px;font-size:22px;line-height:22px;color:#fafafa;font-weight:700;letter-spacing:0px;font-family:'Liberation Sans', sans-serif;">s</div>
<div class="r" style="left:2706.00px;top:1049.30px;width:25.00px;height:6.00px;background:#00a3f5;border-radius:3px;box-sizing:border-box;"></div>
<div class="t" style="left:2742.00px;top:1041.50px;font-size:21.5px;line-height:21.5px;color:#e5e5e5;font-weight:400;letter-spacing:0px;font-family:'Liberation Sans', sans-serif;">V</div>
<svg class="r" style="left:0;top:0" width="2911" height="1662"><polygon points="719.5,1112.3 720.6,1112.5 722.2,1110.7 723.2,1112.1 724.9,1112.6 726.7,1114.5 727.7,1113.6 728.7,1111.3 730.4,1110.7 732.0,1111.2 733.5,1111.0 734.8,1114.0 735.9,1111.5 737.1,1112.9 738.8,1109.0 740.6,1111.3 742.3,1111.5 743.5,1112.8 745.2,1110.6 746.3,1111.9 747.4,1108.4 749.0,1116.0 750.6,1113.7 751.9,1113.7 753.4,1110.8 755.0,1112.8 756.4,1111.4 757.4,1111.7 758.7,1114.1 760.5,1114.0 762.1,1113.3 763.3,1112.2 764.7,1113.5 765.7,1116.4 767.1,1113.0 768.4,1110.0 770.0,1112.6 771.1,1114.2 772.4,1112.8 773.5,1113.4 775.3,1114.4 776.6,1110.8 777.6,1112.9 779.3,1113.3 780.5,1113.4 781.9,1113.9 783.3,1111.3 784.6,1113.7 786.4,1114.2 788.1,1112.4 789.7,1110.6 791.2,1110.9 792.7,1112.2 794.2,1112.6 795.8,1114.1 797.5,1111.0 799.2,1111.0 800.9,1113.1 801.9,1109.5 803.6,1116.7 804.9,1112.4 806.0,1112.3 807.7,1113.3 809.5,1113.7 810.8,1114.1 812.4,1110.8 813.9,1111.4 815.3,1112.1 816.3,1113.0 817.4,1111.5 819.2,1117.4 820.6,1111.2 822.0,1112.9 823.5,1113.7 825.1,1110.7 826.5,1114.4 828.3,1118.3 829.4,1112.3 831.0,1112.6 832.7,1113.0 834.2,1113.5 835.2,1110.7 836.7,1112.7 838.3,1113.6 839.7,1111.5 841.1,1113.5 842.6,1112.4 843.6,1111.7 844.9,1111.0 846.3,1113.7 847.5,1111.9 848.9,1113.7 850.1,1110.6 851.8,1110.8 852.9,1111.2 854.3,1113.6 855.7,1113.4 857.4,1113.7 859.0,1113.7 860.3,1111.2 861.3,1113.1 863.1,1110.2 864.3,1111.2 865.9,1112.4 867.7,1118.2 869.1,1111.6 870.7,1113.4 872.4,1112.6 874.0,1110.5 875.1,1112.4 876.7,1117.5 877.9,1113.8 879.4,1115.5 881.0,1110.5 882.0,1114.5 883.4,1111.7 885.0,1111.8 886.1,1109.4 887.5,1110.9 888.9,1112.5 890.2,1110.6 891.7,1110.6 893.3,1113.8 894.6,1110.7 895.8,1114.3 897.3,1111.8 899.0,1112.7 900.7,1110.8 902.4,1113.4 903.9,1111.7 904.9,1111.3 906.3,1111.6 908.1,1112.9 909.7,1112.4 911.1,1114.1 912.2,1113.4 913.7,1109.7 914.9,1111.7 916.4,1114.0 918.1,1110.9 919.3,1109.6 920.4,1110.6 921.8,1111.3 923.0,1110.2 924.8,1108.9 925.9,1113.3 927.4,1111.3 929.0,1114.0 930.2,1110.6 931.4,1114.6 932.8,1111.2 934.2,1114.2 935.7,1113.6 937.4,1111.2 939.1,1113.6 940.5,1110.6 941.6,1110.6 942.6,1114.1 943.9,1110.7 945.0,1113.1 946.0,1112.1 947.8,1111.1 948.9,1112.1 950.5,1111.4 951.8,1111.8 952.8,1111.9 954.1,1113.9 955.6,1111.2 957.4,1113.2 958.6,1110.6 959.8,1109.6 960.8,1117.3 961.9,1114.7 963.3,1111.0 964.5,1111.6 965.7,1114.0 967.5,1111.7 969.3,1114.0 970.3,1112.0 971.4,1116.5 972.9,1112.3 974.3,1112.4 975.8,1111.5 977.1,1112.8 978.4,1111.6 979.8,1111.7 981.4,1110.1 982.8,1113.0 984.5,1111.8 985.6,1113.0 987.1,1111.4 988.1,1112.8 989.8,1113.3 991.0,1113.4 992.5,1112.2 993.8,1113.2 995.6,1111.0 997.3,1112.9 998.4,1110.5 1000.1,1111.6 1001.7,1112.7 1003.1,1115.2 1004.2,1112.4 1005.3,1111.2 1006.6,1117.9 1008.4,1114.0 1009.4,1111.0 1010.4,1115.4 1011.7,1113.7 1013.3,1115.8 1014.8,1113.7 1016.1,1110.9 1017.6,1110.9 1018.9,1112.6 1020.0,1114.5 1021.1,1111.6 1022.9,1111.1 1024.6,1113.9 1026.0,1113.2 1027.4,1110.6 1028.5,1112.4 1029.8,1111.5 1031.6,1113.8 1032.8,1113.7 1034.3,1110.8 1036.0,1113.6 1037.3,1116.7 1039.0,1110.8 1040.1,1116.5 1041.6,1113.3 1042.7,1114.3 1044.3,1111.9 1046.0,1112.1 1047.1,1112.8 1048.5,1114.2 1049.7,1112.3 1051.1,1111.0 1052.7,1118.4 1054.3,1113.2 1055.6,1112.4 1057.4,1112.1 1058.7,1113.1 1060.0,1113.1 1061.7,1117.3 1063.4,1110.6 1064.8,1111.0 1066.4,1114.4 1068.1,1110.9 1069.6,1114.0 1071.2,1113.6 1072.9,1113.7 1074.2,1113.1 1075.6,1111.7 1076.8,1117.6 1078.2,1110.5 1079.6,1110.5 1080.8,1112.9 1082.2,1114.9 1083.6,1113.9 1084.8,1111.8 1086.3,1119.9 1087.6,1113.2 1089.2,1112.0 1090.3,1111.0 1092.0,1112.7 1093.1,1117.7 1094.5,1113.3 1096.0,1111.3 1097.3,1112.8 1098.6,1113.3 1099.6,1113.8 1101.4,1114.1 1103.1,1110.6 1104.9,1118.7 1106.3,1111.0 1107.6,1114.3 1108.8,1110.6 1110.2,1111.6 1111.9,1113.9 1113.6,1119.3 1115.0,1112.0 1116.2,1111.9 1117.3,1114.5 1118.7,1114.4 1119.9,1112.6 1121.3,1110.8 1122.5,1111.8 1124.2,1113.0 1126.0,1110.8 1127.0,1110.6 1128.6,1108.5 1129.9,1110.6 1131.4,1112.3 1133.1,1111.8 1134.8,1111.2 1136.4,1110.8 1137.7,1111.9 1139.0,1113.7 1140.6,1110.6 1141.8,1114.0 1143.4,1114.3 1145.1,1112.3 1146.4,1110.7 1147.8,1113.5 1149.5,1114.2 1151.1,1114.4 1152.8,1112.5 1154.0,1110.6 1155.2,1113.6 1156.7,1111.8 1158.0,1111.8 1159.2,1112.5 1160.6,1111.1 1162.1,1112.5 1163.5,1117.0 1164.8,1110.3 1166.5,1112.5 1167.7,1113.9 1169.4,1114.4 1171.0,1111.2 1172.3,1113.7 1173.4,1114.4 1175.1,1116.6 1176.6,1114.3 1178.2,1111.4 1179.5,1111.2 1181.2,1111.7 1182.4,1118.0 1183.6,1111.3 1185.0,1114.3 1186.8,1111.0 1188.5,1114.1 1190.2,1109.3 1191.8,1113.1 1193.5,1110.1 1195.1,1112.1 1196.1,1112.2 1197.5,1112.9 1199.2,1112.5 1200.8,1112.3 1202.1,1111.7 1203.4,1114.1 1204.6,1113.4 1205.8,1113.6 1207.4,1111.5 1209.2,1110.7 1210.7,1113.5 1212.2,1112.5 1213.6,1112.6 1214.9,1113.7 1216.6,1112.8 1218.2,1113.8 1219.7,1111.1 1220.8,1110.8 1221.8,1113.8 1223.5,1111.4 1225.0,1114.4 1226.4,1112.2 1227.6,1114.0 1228.6,1111.2 1230.4,1115.3 1231.6,1113.2 1232.9,1111.9 1234.1,1111.0 1235.7,1113.0 1237.1,1112.4 1238.1,1109.7 1239.8,1113.2 1241.5,1114.5 1242.9,1112.6 1243.9,1111.1 1245.3,1113.5 1246.8,1111.4 1247.8,1111.4 1249.6,1111.1 1250.7,1110.6 1252.4,1111.8 1254.2,1110.7 1255.3,1112.5 1256.4,1111.2 1257.9,1113.0 1259.3,1108.2 1260.5,1112.5 1262.1,1113.6 1263.7,1118.8 1265.0,1108.7 1266.1,1110.9 1267.2,1112.8 1268.5,1110.5 1269.6,1112.0 1270.8,1113.5 1272.5,1111.1 1274.3,1114.1 1276.1,1111.1 1277.3,1111.8 1278.5,1112.0 1279.8,1110.5 1280.8,1113.4 1282.1,1111.8 1283.3,1113.6 1284.4,1113.4 1286.1,1113.2 1287.1,1109.8 1288.2,1113.2 1289.7,1114.4 1290.9,1112.9 1292.7,1113.7 1294.5,1112.4 1295.5,1112.8 1296.8,1112.0 1297.9,1111.0 1299.2,1110.6 1300.8,1112.4 1302.0,1114.2 1303.5,1111.8 1304.9,1114.3 1306.5,1113.5 1307.6,1108.8 1308.8,1114.4 1310.4,1112.9 1311.7,1112.0 1313.3,1113.9 1315.0,1114.3 1316.6,1111.4 1317.9,1116.2 1319.0,1110.8 1320.3,1110.6 1322.0,1115.0 1323.8,1112.8 1325.4,1111.9 1326.9,1116.2 1328.2,1112.4 1329.8,1116.0 1331.3,1113.2 1332.9,1110.4 1334.2,1111.1 1335.9,1110.9 1337.0,1111.9 1338.4,1112.4 1339.8,1110.1 1341.5,1110.6 1342.8,1111.2 1343.9,1111.3 1345.2,1112.4 1346.9,1111.8 1348.6,1113.2 1349.8,1112.2 1351.1,1111.3 1352.3,1110.6 1353.4,1113.8 1354.7,1112.3 1356.3,1112.5 1357.7,1112.6 1359.2,1116.8 1360.6,1111.1 1361.7,1111.4 1363.2,1110.7 1364.3,1114.0 1365.4,1111.8 1367.2,1114.1 1368.6,1111.9 1370.3,1110.7 1371.4,1114.4 1372.8,1111.6 1374.6,1111.3 1376.3,1118.7 1377.8,1112.5 1379.4,1117.6 1380.6,1112.3 1381.7,1111.4 1383.2,1113.4 1385.0,1113.2 1386.3,1110.6 1387.3,1113.8 1389.1,1112.3 1390.9,1112.1 1392.0,1112.9 1393.4,1110.7 1394.7,1111.8 1396.1,1116.5 1397.7,1111.1 1399.0,1119.1 1400.5,1111.8 1401.7,1114.7 1402.7,1111.5 1403.7,1112.6 1404.9,1113.6 1406.7,1111.9 1408.4,1116.9 1409.6,1111.3 1410.9,1115.9 1412.1,1113.2 1413.8,1111.7 1415.1,1110.8 1416.2,1111.5 1417.5,1112.3 1418.7,1111.3 1419.7,1111.0 1420.8,1113.4 1422.3,1110.8 1424.0,1113.0 1425.6,1112.5 1426.9,1110.7 1428.6,1114.4 1429.6,1113.2 1430.7,1112.2 1431.7,1113.7 1432.8,1110.1 1434.0,1113.9 1435.7,1114.3 1437.4,1113.4 1438.5,1112.8 1439.9,1111.7 1441.2,1114.3 1442.7,1109.5 1444.5,1113.8 1445.9,1111.8 1447.5,1110.5 1449.0,1112.7 1450.3,1114.0 1451.5,1113.1 1452.6,1113.1 1454.0,1113.3 1455.4,1113.6 1456.6,1114.3 1457.6,1110.6 1459.2,1112.9 1460.8,1112.2 1461.9,1112.3 1462.9,1114.4 1464.2,1116.4 1465.7,1111.8 1466.7,1113.1 1468.1,1112.9 1469.3,1114.4 1470.8,1111.5 1472.3,1112.6 1473.3,1110.7 1474.3,1111.0 1476.0,1112.9 1477.1,1114.2 1478.5,1110.9 1480.1,1112.8 1481.5,1111.7 1482.7,1113.6 1484.1,1112.7 1485.1,1111.0 1486.5,1113.8 1487.6,1113.1 1488.9,1112.4 1490.2,1111.5 1491.7,1110.9 1493.3,1114.0 1494.6,1110.6 1496.2,1113.6 1497.3,1110.8 1498.8,1113.1 1500.4,1113.6 1501.9,1112.7 1503.6,1111.8 1505.3,1113.7 1506.5,1113.8 1507.9,1112.0 1508.9,1111.7 1510.3,1110.9 1511.5,1110.1 1513.0,1112.8 1514.8,1110.9 1516.5,1112.7 1517.6,1111.4 1519.1,1113.1 1520.8,1111.4 1522.1,1116.3 1523.9,1114.0 1525.4,1110.8 1526.8,1113.9 1528.1,1114.3 1529.3,1112.6 1530.7,1115.5 1531.9,1109.6 1533.3,1111.7 1534.6,1112.7 1536.4,1112.7 1538.0,1115.7 1539.4,1113.9 1540.8,1114.3 1542.2,1113.1 1543.6,1110.7 1545.1,1113.4 1546.1,1112.4 1547.6,1110.8 1549.0,1111.2 1550.5,1111.2 1551.7,1111.1 1553.0,1112.3 1554.3,1110.8 1555.9,1116.4 1557.6,1118.4 1559.2,1109.7 1560.4,1110.8 1561.9,1113.8 1563.5,1113.7 1564.7,1110.6 1566.3,1111.2 1567.9,1117.9 1569.0,1111.6 1570.0,1110.6 1571.3,1110.2 1572.7,1111.5 1574.2,1114.1 1575.3,1109.6 1576.5,1111.5 1578.2,1116.2 1579.7,1110.6 1580.8,1113.6 1581.9,1110.8 1583.6,1111.4 1585.2,1112.0 1586.9,1113.0 1588.3,1112.7 1589.7,1111.2 1591.0,1110.8 1592.1,1111.4 1593.8,1113.9 1595.2,1113.7 1596.3,1117.9 1597.4,1112.3 1599.0,1111.9 1600.1,1110.4 1601.9,1113.4 1603.4,1112.7 1604.6,1116.2 1606.0,1110.9 1607.5,1112.5 1609.0,1116.6 1610.2,1112.4 1611.3,1114.4 1613.0,1118.2 1614.2,1110.3 1615.9,1111.0 1616.9,1114.0 1618.0,1110.8 1619.6,1115.6 1620.9,1112.2 1622.4,1112.6 1624.1,1117.5 1625.1,1113.4 1626.2,1114.8 1627.9,1111.8 1629.1,1112.2 1630.3,1116.0 1631.4,1112.2 1633.2,1111.0 1634.8,1109.7 1636.5,1111.3 1637.7,1114.5 1639.3,1110.0 1640.4,1117.3 1642.0,1110.6 1643.4,1114.2 1644.4,1109.7 1645.7,1110.9 1647.3,1112.1 1648.4,1113.8 1650.0,1113.4 1651.8,1110.8 1653.4,1111.8 1654.7,1114.3 1656.1,1113.5 1657.7,1110.9 1658.9,1110.8 1660.0,1110.7 1661.8,1110.7 1663.0,1112.1 1664.5,1110.9 1666.2,1111.6 1667.9,1113.6 1669.7,1114.3 1671.2,1113.1 1672.9,1112.4 1674.5,1116.3 1676.3,1112.9 1677.5,1113.9 1679.1,1113.5 1680.2,1111.9 1681.9,1111.0 1683.6,1113.9 1685.2,1113.6 1686.3,1112.3 1687.4,1119.1 1688.7,1111.4 1690.0,1113.7 1691.7,1112.6 1693.3,1111.3 1694.4,1114.1 1696.2,1112.3 1697.2,1112.2 1698.3,1113.9 1699.3,1110.6 1700.9,1111.9 1702.2,1112.7 1703.4,1111.1 1704.9,1112.0 1706.5,1111.6 1707.8,1111.5 1709.5,1115.2 1710.9,1109.5 1712.4,1111.6 1714.2,1113.5 1715.5,1112.8 1716.8,1112.8 1718.4,1112.7 1720.1,1113.8 1721.5,1114.4 1723.2,1111.2 1724.7,1112.5 1726.3,1111.9 1727.5,1112.8 1728.9,1113.1 1730.0,1111.0 1731.5,1112.5 1732.9,1112.9 1734.1,1112.5 1735.4,1109.6 1736.5,1112.0 1737.5,1111.4 1738.9,1112.0 1740.4,1112.8 1741.7,1112.2 1742.8,1110.9 1744.3,1112.0 1746.0,1112.5 1747.1,1114.1 1748.3,1112.5 1749.6,1111.3 1751.3,1111.5 1752.8,1112.0 1754.4,1111.9 1756.0,1111.7 1757.5,1113.4 1758.6,1115.4 1760.0,1112.1 1761.7,1113.6 1762.8,1112.6 1764.4,1111.5 1765.9,1112.6 1766.9,1115.9 1768.2,1113.4 1769.4,1113.1 1771.1,1111.5 1772.8,1112.1 1774.3,1112.6 1775.9,1117.7 1777.0,1111.3 1778.7,1117.3 1779.9,1113.1 1781.0,1112.0 1782.6,1112.0 1783.7,1114.2 1785.3,1111.0 1786.9,1112.9 1788.5,1112.2 1789.5,1112.2 1790.8,1111.5 1792.6,1111.5 1794.3,1111.5 1795.6,1113.4 1797.1,1117.1 1798.7,1112.5 1799.8,1117.8 1801.3,1110.6 1802.8,1113.8 1804.6,1116.9 1805.6,1111.9 1806.9,1111.8 1808.5,1111.0 1809.7,1114.1 1811.3,1113.6 1812.5,1112.2 1814.2,1113.4 1815.8,1113.4 1817.5,1112.7 1818.7,1112.6 1820.3,1118.2 1821.4,1115.3 1823.1,1112.7 1824.7,1114.2 1826.3,1110.8 1827.4,1111.7 1828.5,1110.3 1829.9,1113.6 1831.3,1111.7 1833.0,1114.4 1834.2,1118.9 1835.3,1113.8 1836.9,1111.3 1838.2,1111.0 1839.6,1115.1 1841.2,1111.7 1842.3,1113.0 1843.7,1110.6 1845.2,1111.3 1846.8,1112.9 1848.5,1114.2 1849.5,1114.4 1850.9,1113.5 1852.3,1114.5 1853.5,1114.5 1855.2,1112.3 1856.7,1113.9 1858.2,1109.7 1860.0,1118.4 1861.5,1111.6 1863.3,1117.1 1864.4,1111.3 1865.4,1112.0 1866.7,1110.9 1867.9,1111.6 1868.9,1111.7 1870.1,1113.3 1871.8,1111.0 1873.1,1113.7 1874.8,1113.6 1876.1,1112.7 1877.3,1109.7 1879.0,1111.3 1880.7,1111.4 1882.4,1111.5 1883.7,1111.7 1884.9,1113.2 1886.1,1113.3 1887.3,1114.2 1888.8,1114.5 1890.1,1111.2 1891.8,1116.6 1892.8,1110.5 1893.9,1114.4 1895.1,1112.7 1896.5,1116.2 1897.9,1113.3 1899.3,1114.1 1900.4,1112.9 1901.5,1111.5 1902.7,1112.5 1904.2,1114.1 1905.3,1110.0 1906.8,1112.7 1908.1,1112.7 1909.4,1113.2 1910.9,1113.4 1912.6,1111.3 1914.3,1113.7 1915.6,1110.6 1917.1,1114.4 1918.5,1112.7 1920.2,1111.6 1921.6,1109.4 1923.0,1113.1 1924.2,1110.4 1925.8,1111.7 1927.1,1112.8 1928.1,1114.1 1929.6,1111.8 1930.8,1118.1 1931.9,1114.3 1933.5,1112.3 1935.2,1115.3 1936.6,1113.4 1937.7,1117.7 1939.2,1112.9 1940.6,1112.2 1941.8,1110.3 1943.2,1114.0 1944.3,1111.7 1945.8,1113.7 1946.8,1114.4 1948.1,1110.8 1949.6,1109.9 1951.2,1112.8 1952.8,1114.4 1953.9,1113.4 1955.0,1109.9 1956.7,1111.3 1957.9,1113.2 1959.5,1112.2 1961.1,1110.6 1962.8,1112.2 1964.2,1113.4 1965.3,1111.6 1967.0,1117.9 1968.5,1110.6 1970.2,1113.8 1972.0,1113.8 1973.2,1113.7 1974.7,1111.9 1976.3,1112.9 1978.1,1114.4 1979.8,1110.7 1981.3,1110.9 1983.0,1116.7 1984.1,1115.1 1985.7,1111.7 1987.0,1113.6 1988.4,1113.7 1989.7,1112.9 1990.9,1112.5 1992.0,1112.3 1993.2,1112.7 1994.7,1113.7 1995.7,1113.3 1997.1,1113.0 1998.1,1115.2 1999.9,1111.9 2001.2,1110.5 2002.4,1109.9 2004.1,1118.0 2005.3,1112.4 2006.3,1111.0 2007.4,1112.1 2009.2,1113.1 2010.8,1111.6 2011.8,1111.3 2013.3,1111.1 2014.7,1117.7 2016.4,1113.2 2017.7,1111.4 2019.2,1116.2 2020.3,1110.9 2021.9,1110.7 2022.9,1110.8 2024.1,1110.3 2025.8,1112.2 2027.0,1112.6 2028.3,1111.6 2029.5,1110.6 2030.7,1113.5 2032.3,1111.1 2033.6,1113.0 2035.0,1111.4 2036.4,1118.5 2037.6,1114.0 2039.0,1112.3 2040.0,1112.4 2041.1,1116.9 2042.4,1111.5 2043.5,1111.1 2044.9,1113.6 2046.3,1112.7 2047.8,1114.1 2049.6,1111.4 2051.2,1112.0 2052.7,1111.7 2054.3,1111.0 2055.3,1109.5 2056.9,1113.2 2058.5,1112.9 2059.6,1111.8 2061.0,1114.1 2062.1,1112.0 2063.6,1113.8 2064.8,1111.7 2066.2,1113.9 2067.6,1111.1 2068.8,1115.2 2069.8,1116.6 2071.4,1114.5 2073.2,1113.5 2074.4,1110.6 2076.1,1112.1 2077.3,1114.5 2078.5,1114.4 2080.1,1113.6 2081.5,1113.0 2082.7,1112.3 2084.0,1113.5 2085.6,1112.0 2086.7,1112.4 2088.2,1114.0 2089.2,1112.8 2090.5,1111.8 2091.9,1112.9 2093.5,1112.3 2094.9,1114.4 2096.5,1113.4 2098.1,1117.1 2099.3,1112.7 2100.7,1108.9 2101.9,1111.8 2103.4,1111.1 2104.7,1114.8 2105.7,1109.8 2107.3,1110.8 2108.9,1112.2 2110.3,1113.9 2111.3,1112.1 2112.6,1114.9 2114.0,1112.3 2115.8,1114.1 2117.1,1111.8 2118.2,1113.9 2119.5,1114.2 2120.6,1113.7 2122.3,1113.7 2123.4,1110.5 2125.1,1111.1 2126.2,1109.5 2127.8,1113.5 2129.0,1112.2 2130.1,1112.9 2131.6,1113.8 2133.0,1111.3 2134.0,1112.7 2135.1,1115.7 2136.3,1108.4 2137.8,1113.2 2138.8,1111.4 2140.4,1114.4 2141.4,1112.2 2143.0,1113.2 2144.8,1113.3 2146.3,1113.6 2147.8,1112.7 2149.2,1112.7 2150.4,1111.3 2151.7,1116.5 2152.8,1116.6 2154.4,1114.2 2156.0,1111.2 2157.1,1113.5 2158.4,1115.6 2159.7,1115.0 2161.2,1110.8 2162.3,1112.2 2163.7,1113.1 2165.4,1111.1 2167.2,1112.1 2168.5,1113.1 2169.6,1111.1 2170.8,1112.1 2172.2,1111.0 2173.9,1111.7 2175.5,1113.2 2176.6,1112.5 2178.2,1114.8 2179.6,1115.7 2181.4,1113.5 2182.5,1112.3 2184.0,1111.4 2185.6,1111.8 2187.0,1110.8 2188.6,1112.2 2190.0,1114.1 2191.1,1111.8 2192.3,1113.0 2193.8,1112.8 2195.2,1115.7 2196.2,1113.2 2197.4,1113.1 2198.5,1113.6 2199.6,1113.4 2200.8,1111.6 2202.1,1112.9 2203.3,1114.5 2204.4,1114.3 2205.7,1110.5 2207.4,1114.2 2208.7,1111.2 2209.9,1108.8 2211.0,1112.0 2212.8,1112.6 2213.9,1112.5 2215.2,1113.3 2216.5,1114.2 2218.2,1111.7 2219.2,1113.0 2220.4,1113.4 2222.0,1112.2 2223.1,1110.9 2224.2,1111.6 2225.3,1117.8 2227.0,1110.7 2228.3,1112.9 2230.1,1116.6 2231.8,1111.0 2233.5,1111.5 2235.1,1112.9 2236.9,1111.8 2238.3,1110.8 2239.7,1111.3 2241.1,1109.4 2242.6,1111.5 2243.9,1111.4 2245.0,1113.7 2246.8,1113.3 2248.1,1108.2 2249.5,1113.3 2250.9,1110.6 2252.4,1111.7 2254.0,1111.2 2255.0,1111.5 2256.2,1113.7 2257.2,1112.0 2259.0,1111.8 2260.6,1110.4 2262.1,1118.7 2263.3,1114.0 2264.6,1113.5 2266.3,1115.9 2267.8,1111.9 2269.1,1110.7 2270.7,1114.4 2272.1,1113.8 2273.3,1113.9 2274.7,1111.5 2276.1,1110.5 2277.2,1112.8 2278.5,1113.3 2280.3,1114.1 2282.0,1114.4 2283.2,1113.1 2284.5,1110.8 2285.7,1113.0 2287.3,1117.8 2289.0,1110.9 2290.2,1110.8 2291.8,1111.3 2293.3,1111.9 2294.7,1118.0 2296.0,1114.7 2297.3,1112.3 2298.9,1109.4 2300.2,1113.7 2301.4,1113.7 2303.2,1110.8 2304.2,1113.4 2305.9,1112.9 2306.9,1112.3 2308.0,1112.4 2309.0,1113.0 2310.7,1112.6 2311.8,1113.4 2313.0,1111.8 2314.5,1110.9 2315.7,1110.6 2316.8,1112.9 2318.5,1112.8 2320.2,1111.0 2321.7,1112.7 2322.8,1113.2 2324.4,1113.9 2325.5,1114.0 2327.2,1113.6 2328.9,1111.9 2330.4,1117.7 2331.7,1113.7 2333.4,1112.6 2334.8,1112.6 2336.4,1112.7 2337.9,1110.9 2339.4,1110.9 2340.9,1113.0 2342.1,1114.4 2343.6,1113.8 2344.7,1110.7 2346.0,1111.4 2347.5,1113.7 2349.1,1114.8 2350.4,1112.9 2351.7,1109.8 2352.9,1111.9 2353.9,1117.9 2355.1,1117.4 2356.1,1112.9 2357.4,1112.9 2358.9,1112.6 2360.3,1116.7 2361.5,1114.3 2363.0,1117.8 2364.1,1111.4 2365.9,1113.7 2367.0,1111.9 2368.7,1111.8 2370.3,1112.0 2371.5,1112.1 2372.7,1110.5 2373.7,1110.8 2375.1,1112.6 2376.3,1113.1 2378.0,1112.3 2379.1,1113.4 2380.7,1111.6 2381.8,1110.1 2383.3,1114.1 2384.5,1113.5 2386.3,1113.0 2388.0,1110.7 2389.1,1114.4 2390.3,1112.9 2391.4,1109.3 2393.2,1113.7 2394.2,1111.8 2395.6,1111.9 2397.1,1111.5 2398.8,1112.4 2400.5,1113.2 2401.5,1110.9 2403.3,1111.9 2404.9,1114.1 2406.0,1111.5 2407.5,1112.2 2409.1,1111.6 2410.4,1113.8 2412.2,1111.9 2413.3,1119.4 2414.5,1113.0 2415.8,1119.9 2417.4,1113.3 2418.8,1111.6 2420.5,1115.8 2421.5,1113.4 2423.1,1111.4 2424.3,1112.9 2425.5,1111.7 2426.9,1111.8 2428.3,1111.0 2429.6,1111.7 2430.9,1113.6 2432.0,1109.6 2433.7,1109.5 2434.9,1111.0 2436.1,1110.8 2437.1,1111.0 2438.9,1112.5 2440.1,1111.5 2441.3,1111.7 2442.4,1113.5 2443.5,1117.9 2444.8,1110.9 2445.9,1112.6 2447.2,1111.8 2448.9,1113.2 2450.6,1111.5 2451.7,1112.8 2453.4,1113.0 2454.9,1111.0 2456.0,1114.4 2457.4,1111.1 2459.1,1109.9 2460.9,1112.8 2462.2,1111.2 2463.4,1111.2 2465.2,1111.8 2466.6,1112.3 2468.3,1112.5 2469.6,1114.2 2470.7,1111.2 2472.3,1111.3 2473.7,1113.3 2474.8,1111.6 2476.4,1114.0 2477.5,1112.2 2479.1,1112.2 2480.6,1114.3 2481.8,1112.6 2482.9,1114.0 2484.4,1113.5 2485.5,1111.3 2487.3,1119.2 2488.5,1110.7 2490.1,1110.6 2491.3,1114.0 2492.3,1114.2 2494.1,1111.0 2495.4,1112.4 2496.9,1119.6 2498.4,1114.5 2499.6,1112.3 2501.1,1114.9 2502.5,1110.9 2503.5,1110.3 2504.8,1113.3 2506.2,1110.7 2507.8,1114.1 2509.3,1112.4 2511.0,1113.3 2512.3,1111.4 2513.9,1110.9 2515.4,1114.1 2516.4,1110.0 2517.8,1111.5 2518.8,1110.7 2520.0,1112.1 2521.3,1111.3 2523.0,1113.3 2524.2,1114.4 2526.0,1110.9 2527.3,1112.0 2528.7,1113.5 2530.4,1112.5 2531.6,1112.0 2533.2,1113.0 2534.4,1111.4 2536.2,1110.3 2538.0,1110.2 2539.3,1112.9 2540.6,1114.3 2542.0,1113.1 2543.8,1112.0 2545.2,1110.6 2546.5,1114.3 2548.0,1108.2 2549.6,1112.0 2550.8,1114.3 2552.4,1113.9 2553.9,1108.9 2555.0,1112.0 2556.7,1111.7 2557.7,1114.2 2559.2,1110.7 2561.0,1112.1 2562.5,1112.0 2564.0,1116.4 2565.7,1112.4 2566.7,1111.9 2568.5,1113.9 2569.6,1112.3 2570.6,1113.3 2571.6,1112.7 2572.7,1112.6 2574.4,1115.6 2575.6,1111.5 2576.7,1111.7 2578.3,1116.0 2579.6,1114.3 2580.8,1112.5 2582.3,1112.8 2583.8,1111.6 2584.9,1110.5 2586.7,1112.9 2588.1,1114.0 2589.1,1117.6 2590.5,1111.7 2591.9,1112.0 2593.2,1113.6 2594.9,1112.8 2596.5,1113.7 2597.9,1112.4 2599.2,1111.4 2600.5,1111.3 2602.0,1112.1 2603.1,1115.9 2604.3,1113.3 2605.6,1114.3 2607.1,1110.6 2608.7,1110.7 2610.3,1109.0 2612.0,1113.5 2613.4,1110.7 2614.5,1111.7 2615.8,1113.3 2617.3,1113.6 2618.6,1112.1 2619.8,1113.9 2620.9,1111.3 2621.9,1111.8 2623.0,1112.7 2624.8,1111.7 2626.3,1116.2 2627.4,1114.4 2628.6,1110.5 2629.7,1112.1 2630.8,1111.9 2632.4,1111.1 2633.8,1112.2 2635.2,1115.8 2636.5,1114.5 2638.1,1112.4 2639.5,1110.6 2640.5,1112.8 2641.8,1111.8 2643.2,1111.9 2644.4,1114.3 2646.0,1117.6 2647.2,1111.7 2648.8,1111.1 2649.9,1110.3 2651.0,1111.5 2652.8,1111.5 2654.0,1112.8 2655.5,1113.0 2656.9,1110.2 2657.9,1112.0 2659.7,1112.7 2660.9,1110.9 2662.4,1115.0 2663.8,1117.7 2665.2,1112.8 2666.4,1113.5 2667.4,1110.3 2668.6,1113.0 2669.7,1108.9 2671.2,1112.1 2672.7,1112.7 2674.3,1111.4 2675.5,1112.2 2676.6,1111.9 2677.6,1111.9 2679.1,1111.7 2680.7,1111.4 2682.2,1111.6 2683.3,1114.0 2684.9,1115.4 2686.0,1114.0 2687.3,1112.1 2689.0,1110.4 2690.7,1110.6 2692.2,1112.8 2693.8,1119.3 2695.2,1113.2 2696.8,1110.8 2698.2,1112.6 2699.2,1110.6 2700.9,1110.5 2702.4,1110.8 2703.5,1111.2 2704.6,1111.0 2705.7,1113.5 2707.0,1113.5 2708.7,1111.0 2709.7,1114.2 2711.2,1112.3 2712.6,1112.8 2714.3,1112.2 2715.4,1114.4 2716.7,1110.1 2718.2,1112.3 2719.8,1112.3 2721.0,1113.2 2722.2,1114.4 2723.9,1111.7 2725.3,1113.9 2726.6,1114.0 2727.7,1112.1 2729.4,1116.7 2731.0,1111.5 2732.3,1114.0 2733.8,1114.0 2735.5,1109.6 2736.7,1114.3 2737.9,1112.0 2737.9,1133.5 2736.7,1132.0 2735.5,1135.0 2733.8,1130.8 2732.3,1133.4 2731.0,1132.7 2729.4,1134.2 2727.7,1128.6 2726.6,1133.7 2725.3,1131.1 2723.9,1133.3 2722.2,1132.9 2721.0,1134.2 2719.8,1131.6 2718.2,1135.4 2716.7,1133.6 2715.4,1129.5 2714.3,1130.6 2712.6,1131.5 2711.2,1128.0 2709.7,1134.4 2708.7,1127.8 2707.0,1129.0 2705.7,1134.2 2704.6,1132.9 2703.5,1131.2 2702.4,1131.7 2700.9,1134.3 2699.2,1133.3 2698.2,1130.9 2696.8,1132.6 2695.2,1132.1 2693.8,1130.6 2692.2,1136.0 2690.7,1133.9 2689.0,1128.7 2687.3,1133.5 2686.0,1132.7 2684.9,1131.1 2683.3,1129.0 2682.2,1131.8 2680.7,1134.0 2679.1,1130.9 2677.6,1133.1 2676.6,1131.8 2675.5,1133.0 2674.3,1134.5 2672.7,1130.9 2671.2,1130.7 2669.7,1131.2 2668.6,1134.3 2667.4,1131.4 2666.4,1133.0 2665.2,1131.9 2663.8,1134.1 2662.4,1132.2 2660.9,1135.5 2659.7,1132.6 2657.9,1131.0 2656.9,1132.0 2655.5,1134.4 2654.0,1132.3 2652.8,1132.5 2651.0,1132.2 2649.9,1131.4 2648.8,1125.0 2647.2,1134.3 2646.0,1133.9 2644.4,1135.1 2643.2,1134.2 2641.8,1131.6 2640.5,1132.8 2639.5,1133.3 2638.1,1131.8 2636.5,1131.5 2635.2,1128.9 2633.8,1128.5 2632.4,1128.9 2630.8,1132.2 2629.7,1130.6 2628.6,1132.2 2627.4,1134.2 2626.3,1127.9 2624.8,1128.6 2623.0,1134.2 2621.9,1134.3 2620.9,1134.3 2619.8,1132.0 2618.6,1125.2 2617.3,1136.0 2615.8,1126.5 2614.5,1130.7 2613.4,1132.2 2612.0,1133.7 2610.3,1131.6 2608.7,1132.4 2607.1,1132.3 2605.6,1135.1 2604.3,1132.6 2603.1,1130.3 2602.0,1134.2 2600.5,1133.1 2599.2,1131.9 2597.9,1131.8 2596.5,1132.1 2594.9,1131.0 2593.2,1130.8 2591.9,1131.1 2590.5,1130.6 2589.1,1129.5 2588.1,1130.6 2586.7,1130.8 2584.9,1134.1 2583.8,1132.4 2582.3,1132.7 2580.8,1133.8 2579.6,1131.5 2578.3,1134.2 2576.7,1133.6 2575.6,1132.4 2574.4,1130.2 2572.7,1132.2 2571.6,1132.5 2570.6,1130.6 2569.6,1133.7 2568.5,1130.7 2566.7,1130.7 2565.7,1132.4 2564.0,1131.6 2562.5,1127.3 2561.0,1133.6 2559.2,1132.4 2557.7,1132.3 2556.7,1131.8 2555.0,1132.1 2553.9,1132.5 2552.4,1134.3 2550.8,1133.5 2549.6,1129.2 2548.0,1131.0 2546.5,1129.2 2545.2,1133.1 2543.8,1128.8 2542.0,1133.1 2540.6,1134.6 2539.3,1132.8 2538.0,1133.8 2536.2,1134.3 2534.4,1132.4 2533.2,1127.5 2531.6,1133.5 2530.4,1133.9 2528.7,1131.5 2527.3,1130.7 2526.0,1127.3 2524.2,1132.2 2523.0,1131.7 2521.3,1132.7 2520.0,1132.8 2518.8,1132.9 2517.8,1132.2 2516.4,1132.2 2515.4,1132.7 2513.9,1132.0 2512.3,1131.4 2511.0,1133.9 2509.3,1134.4 2507.8,1136.5 2506.2,1128.3 2504.8,1134.0 2503.5,1132.5 2502.5,1131.9 2501.1,1134.9 2499.6,1132.1 2498.4,1130.8 2496.9,1128.8 2495.4,1130.6 2494.1,1132.9 2492.3,1124.8 2491.3,1131.4 2490.1,1135.2 2488.5,1131.7 2487.3,1134.1 2485.5,1134.4 2484.4,1132.7 2482.9,1134.1 2481.8,1132.2 2480.6,1132.0 2479.1,1132.9 2477.5,1125.9 2476.4,1134.6 2474.8,1131.9 2473.7,1131.0 2472.3,1131.5 2470.7,1133.6 2469.6,1133.1 2468.3,1131.2 2466.6,1133.6 2465.2,1131.5 2463.4,1131.0 2462.2,1133.4 2460.9,1128.3 2459.1,1130.7 2457.4,1133.1 2456.0,1129.4 2454.9,1125.7 2453.4,1134.0 2451.7,1134.2 2450.6,1129.5 2448.9,1131.9 2447.2,1135.0 2445.9,1127.8 2444.8,1129.6 2443.5,1128.9 2442.4,1130.7 2441.3,1130.5 2440.1,1131.6 2438.9,1133.4 2437.1,1131.9 2436.1,1133.3 2434.9,1131.5 2433.7,1134.4 2432.0,1132.7 2430.9,1129.8 2429.6,1132.8 2428.3,1130.1 2426.9,1130.8 2425.5,1134.1 2424.3,1131.4 2423.1,1126.2 2421.5,1132.4 2420.5,1130.6 2418.8,1133.2 2417.4,1132.1 2415.8,1132.0 2414.5,1132.9 2413.3,1134.2 2412.2,1133.0 2410.4,1135.2 2409.1,1133.0 2407.5,1134.0 2406.0,1132.3 2404.9,1133.5 2403.3,1131.6 2401.5,1133.1 2400.5,1130.7 2398.8,1128.6 2397.1,1132.9 2395.6,1134.2 2394.2,1131.0 2393.2,1131.4 2391.4,1132.8 2390.3,1128.4 2389.1,1129.5 2388.0,1134.9 2386.3,1130.6 2384.5,1131.8 2383.3,1134.0 2381.8,1133.5 2380.7,1130.7 2379.1,1132.9 2378.0,1134.1 2376.3,1133.0 2375.1,1132.4 2373.7,1134.3 2372.7,1129.3 2371.5,1131.3 2370.3,1130.7 2368.7,1131.3 2367.0,1130.9 2365.9,1132.3 2364.1,1129.7 2363.0,1133.3 2361.5,1128.7 2360.3,1132.6 2358.9,1132.1 2357.4,1134.4 2356.1,1134.4 2355.1,1127.1 2353.9,1135.2 2352.9,1130.8 2351.7,1133.4 2350.4,1131.7 2349.1,1133.5 2347.5,1134.8 2346.0,1130.6 2344.7,1134.3 2343.6,1132.8 2342.1,1133.5 2340.9,1132.0 2339.4,1132.2 2337.9,1130.8 2336.4,1132.3 2334.8,1131.5 2333.4,1135.3 2331.7,1131.4 2330.4,1132.5 2328.9,1133.3 2327.2,1134.1 2325.5,1130.9 2324.4,1133.1 2322.8,1131.5 2321.7,1132.0 2320.2,1133.7 2318.5,1125.9 2316.8,1132.1 2315.7,1133.6 2314.5,1130.5 2313.0,1131.6 2311.8,1133.0 2310.7,1133.9 2309.0,1133.7 2308.0,1136.2 2306.9,1134.0 2305.9,1130.4 2304.2,1130.7 2303.2,1133.0 2301.4,1134.8 2300.2,1129.3 2298.9,1130.8 2297.3,1131.4 2296.0,1132.5 2294.7,1131.6 2293.3,1129.0 2291.8,1128.2 2290.2,1134.0 2289.0,1133.2 2287.3,1133.8 2285.7,1131.8 2284.5,1129.4 2283.2,1132.2 2282.0,1130.9 2280.3,1128.7 2278.5,1132.9 2277.2,1134.1 2276.1,1130.8 2274.7,1134.6 2273.3,1131.1 2272.1,1130.5 2270.7,1131.2 2269.1,1133.9 2267.8,1133.9 2266.3,1134.3 2264.6,1132.5 2263.3,1131.3 2262.1,1130.6 2260.6,1129.5 2259.0,1136.0 2257.2,1131.1 2256.2,1134.0 2255.0,1130.7 2254.0,1134.0 2252.4,1134.0 2250.9,1134.0 2249.5,1132.0 2248.1,1132.5 2246.8,1131.0 2245.0,1124.8 2243.9,1132.8 2242.6,1126.8 2241.1,1133.9 2239.7,1134.0 2238.3,1131.0 2236.9,1133.3 2235.1,1134.3 2233.5,1133.5 2231.8,1132.5 2230.1,1130.9 2228.3,1132.2 2227.0,1133.1 2225.3,1131.2 2224.2,1131.3 2223.1,1133.7 2222.0,1132.7 2220.4,1134.3 2219.2,1134.2 2218.2,1134.3 2216.5,1132.7 2215.2,1131.9 2213.9,1131.3 2212.8,1129.9 2211.0,1132.3 2209.9,1132.0 2208.7,1134.1 2207.4,1131.9 2205.7,1131.0 2204.4,1125.2 2203.3,1135.6 2202.1,1132.9 2200.8,1132.2 2199.6,1134.4 2198.5,1132.4 2197.4,1132.3 2196.2,1133.7 2195.2,1130.0 2193.8,1132.3 2192.3,1133.6 2191.1,1132.2 2190.0,1131.1 2188.6,1130.6 2187.0,1133.7 2185.6,1134.2 2184.0,1130.0 2182.5,1132.9 2181.4,1134.4 2179.6,1125.5 2178.2,1131.9 2176.6,1135.3 2175.5,1132.9 2173.9,1130.7 2172.2,1132.7 2170.8,1132.0 2169.6,1126.6 2168.5,1133.5 2167.2,1133.3 2165.4,1128.1 2163.7,1133.7 2162.3,1130.9 2161.2,1133.7 2159.7,1132.6 2158.4,1125.4 2157.1,1128.6 2156.0,1133.2 2154.4,1132.9 2152.8,1133.8 2151.7,1130.7 2150.4,1133.5 2149.2,1130.7 2147.8,1131.2 2146.3,1134.1 2144.8,1130.6 2143.0,1132.0 2141.4,1132.1 2140.4,1132.6 2138.8,1132.9 2137.8,1133.6 2136.3,1132.8 2135.1,1132.9 2134.0,1133.4 2133.0,1131.6 2131.6,1132.9 2130.1,1131.0 2129.0,1132.1 2127.8,1133.2 2126.2,1129.5 2125.1,1133.0 2123.4,1129.3 2122.3,1131.3 2120.6,1133.4 2119.5,1133.8 2118.2,1132.6 2117.1,1130.8 2115.8,1134.9 2114.0,1131.2 2112.6,1133.2 2111.3,1130.9 2110.3,1132.2 2108.9,1133.1 2107.3,1135.9 2105.7,1134.1 2104.7,1132.3 2103.4,1132.5 2101.9,1130.5 2100.7,1133.8 2099.3,1134.4 2098.1,1133.1 2096.5,1131.4 2094.9,1132.1 2093.5,1131.9 2091.9,1134.5 2090.5,1128.6 2089.2,1131.3 2088.2,1133.6 2086.7,1133.1 2085.6,1131.9 2084.0,1127.8 2082.7,1130.8 2081.5,1132.6 2080.1,1132.8 2078.5,1133.6 2077.3,1130.9 2076.1,1131.6 2074.4,1132.4 2073.2,1132.8 2071.4,1131.3 2069.8,1133.9 2068.8,1132.5 2067.6,1131.2 2066.2,1131.1 2064.8,1127.6 2063.6,1131.5 2062.1,1132.9 2061.0,1132.2 2059.6,1131.2 2058.5,1134.4 2056.9,1132.3 2055.3,1127.3 2054.3,1133.0 2052.7,1133.2 2051.2,1131.1 2049.6,1128.3 2047.8,1132.4 2046.3,1133.6 2044.9,1134.4 2043.5,1131.8 2042.4,1132.5 2041.1,1132.1 2040.0,1131.4 2039.0,1128.5 2037.6,1132.9 2036.4,1134.3 2035.0,1132.0 2033.6,1134.0 2032.3,1132.4 2030.7,1130.7 2029.5,1131.9 2028.3,1129.2 2027.0,1131.4 2025.8,1132.9 2024.1,1130.5 2022.9,1128.7 2021.9,1131.2 2020.3,1126.7 2019.2,1133.9 2017.7,1132.3 2016.4,1132.8 2014.7,1134.5 2013.3,1130.5 2011.8,1133.2 2010.8,1133.6 2009.2,1132.8 2007.4,1132.3 2006.3,1132.5 2005.3,1131.5 2004.1,1133.5 2002.4,1130.8 2001.2,1126.2 1999.9,1131.6 1998.1,1134.5 1997.1,1133.8 1995.7,1129.1 1994.7,1132.1 1993.2,1131.5 1992.0,1130.8 1990.9,1132.6 1989.7,1133.0 1988.4,1130.5 1987.0,1130.2 1985.7,1132.5 1984.1,1133.6 1983.0,1132.8 1981.3,1133.0 1979.8,1132.5 1978.1,1133.9 1976.3,1133.5 1974.7,1132.9 1973.2,1132.2 1972.0,1132.9 1970.2,1134.0 1968.5,1131.2 1967.0,1133.5 1965.3,1130.6 1964.2,1133.3 1962.8,1134.2 1961.1,1130.7 1959.5,1133.3 1957.9,1131.6 1956.7,1130.7 1955.0,1134.1 1953.9,1126.8 1952.8,1131.6 1951.2,1133.7 1949.6,1130.7 1948.1,1131.2 1946.8,1132.4 1945.8,1131.5 1944.3,1131.4 1943.2,1133.0 1941.8,1130.8 1940.6,1133.8 1939.2,1132.9 1937.7,1133.4 1936.6,1131.1 1935.2,1134.0 1933.5,1135.0 1931.9,1132.7 1930.8,1132.2 1929.6,1132.7 1928.1,1129.2 1927.1,1132.1 1925.8,1132.4 1924.2,1133.6 1923.0,1133.8 1921.6,1131.4 1920.2,1134.3 1918.5,1131.5 1917.1,1131.2 1915.6,1126.3 1914.3,1132.5 1912.6,1132.6 1910.9,1134.2 1909.4,1128.7 1908.1,1133.9 1906.8,1132.4 1905.3,1134.2 1904.2,1132.3 1902.7,1126.7 1901.5,1133.4 1900.4,1133.7 1899.3,1133.1 1897.9,1130.8 1896.5,1130.7 1895.1,1133.2 1893.9,1131.1 1892.8,1132.7 1891.8,1131.3 1890.1,1135.5 1888.8,1133.1 1887.3,1133.8 1886.1,1132.5 1884.9,1130.8 1883.7,1132.3 1882.4,1129.7 1880.7,1133.3 1879.0,1132.3 1877.3,1131.6 1876.1,1132.9 1874.8,1134.4 1873.1,1130.7 1871.8,1130.6 1870.1,1131.1 1868.9,1131.2 1867.9,1134.8 1866.7,1126.8 1865.4,1134.5 1864.4,1131.2 1863.3,1130.6 1861.5,1132.7 1860.0,1126.8 1858.2,1131.2 1856.7,1132.8 1855.2,1132.0 1853.5,1133.4 1852.3,1131.2 1850.9,1131.2 1849.5,1131.9 1848.5,1131.3 1846.8,1133.9 1845.2,1126.3 1843.7,1127.3 1842.3,1131.4 1841.2,1132.7 1839.6,1131.5 1838.2,1131.9 1836.9,1131.5 1835.3,1132.0 1834.2,1131.0 1833.0,1133.2 1831.3,1132.5 1829.9,1130.7 1828.5,1133.8 1827.4,1133.3 1826.3,1131.2 1824.7,1133.8 1823.1,1132.0 1821.4,1129.4 1820.3,1134.5 1818.7,1133.9 1817.5,1134.3 1815.8,1131.8 1814.2,1131.5 1812.5,1131.8 1811.3,1131.3 1809.7,1133.0 1808.5,1128.8 1806.9,1134.1 1805.6,1133.6 1804.6,1132.7 1802.8,1130.6 1801.3,1134.5 1799.8,1131.9 1798.7,1131.0 1797.1,1134.0 1795.6,1136.6 1794.3,1132.3 1792.6,1132.6 1790.8,1132.3 1789.5,1125.3 1788.5,1132.1 1786.9,1132.1 1785.3,1132.4 1783.7,1130.7 1782.6,1131.2 1781.0,1131.1 1779.9,1131.0 1778.7,1128.3 1777.0,1130.6 1775.9,1136.4 1774.3,1133.8 1772.8,1132.8 1771.1,1134.0 1769.4,1131.6 1768.2,1132.9 1766.9,1131.8 1765.9,1131.6 1764.4,1132.7 1762.8,1131.6 1761.7,1131.7 1760.0,1132.9 1758.6,1132.9 1757.5,1131.5 1756.0,1133.3 1754.4,1131.4 1752.8,1131.2 1751.3,1126.2 1749.6,1132.2 1748.3,1132.2 1747.1,1127.4 1746.0,1132.2 1744.3,1134.9 1742.8,1130.1 1741.7,1131.7 1740.4,1128.1 1738.9,1132.4 1737.5,1130.7 1736.5,1134.3 1735.4,1132.8 1734.1,1131.1 1732.9,1133.2 1731.5,1133.4 1730.0,1131.2 1728.9,1128.5 1727.5,1133.1 1726.3,1133.8 1724.7,1134.1 1723.2,1131.9 1721.5,1132.9 1720.1,1132.8 1718.4,1132.7 1716.8,1134.3 1715.5,1128.8 1714.2,1131.0 1712.4,1132.8 1710.9,1132.1 1709.5,1132.3 1707.8,1132.3 1706.5,1133.2 1704.9,1134.3 1703.4,1132.0 1702.2,1132.6 1700.9,1130.8 1699.3,1133.9 1698.3,1131.2 1697.2,1131.8 1696.2,1133.9 1694.4,1136.0 1693.3,1132.8 1691.7,1133.9 1690.0,1134.0 1688.7,1130.0 1687.4,1128.9 1686.3,1132.4 1685.2,1132.8 1683.6,1134.2 1681.9,1132.2 1680.2,1133.2 1679.1,1128.1 1677.5,1132.5 1676.3,1133.0 1674.5,1134.4 1672.9,1131.9 1671.2,1127.0 1669.7,1132.7 1667.9,1133.9 1666.2,1131.6 1664.5,1128.8 1663.0,1131.9 1661.8,1131.8 1660.0,1132.5 1658.9,1134.3 1657.7,1130.9 1656.1,1133.9 1654.7,1131.3 1653.4,1130.9 1651.8,1133.6 1650.0,1131.8 1648.4,1134.0 1647.3,1135.8 1645.7,1131.0 1644.4,1133.1 1643.4,1134.8 1642.0,1133.6 1640.4,1134.3 1639.3,1134.0 1637.7,1131.9 1636.5,1135.0 1634.8,1130.5 1633.2,1132.5 1631.4,1131.2 1630.3,1131.5 1629.1,1133.8 1627.9,1133.5 1626.2,1132.3 1625.1,1130.7 1624.1,1131.4 1622.4,1133.9 1620.9,1130.8 1619.6,1130.5 1618.0,1131.1 1616.9,1131.9 1615.9,1131.9 1614.2,1132.0 1613.0,1133.5 1611.3,1133.5 1610.2,1132.8 1609.0,1131.4 1607.5,1134.0 1606.0,1130.9 1604.6,1133.0 1603.4,1131.7 1601.9,1133.3 1600.1,1132.5 1599.0,1131.9 1597.4,1134.2 1596.3,1129.0 1595.2,1135.0 1593.8,1132.9 1592.1,1130.6 1591.0,1132.6 1589.7,1130.9 1588.3,1126.4 1586.9,1128.0 1585.2,1130.8 1583.6,1132.1 1581.9,1133.8 1580.8,1133.0 1579.7,1134.3 1578.2,1135.4 1576.5,1134.1 1575.3,1134.2 1574.2,1131.9 1572.7,1132.9 1571.3,1132.8 1570.0,1134.1 1569.0,1130.0 1567.9,1133.5 1566.3,1131.4 1564.7,1134.3 1563.5,1131.6 1561.9,1134.4 1560.4,1129.2 1559.2,1132.5 1557.6,1133.9 1555.9,1133.5 1554.3,1134.8 1553.0,1132.4 1551.7,1133.2 1550.5,1132.5 1549.0,1134.1 1547.6,1133.0 1546.1,1133.4 1545.1,1132.1 1543.6,1131.2 1542.2,1131.3 1540.8,1130.9 1539.4,1130.6 1538.0,1132.4 1536.4,1134.0 1534.6,1133.5 1533.3,1127.3 1531.9,1130.4 1530.7,1131.2 1529.3,1130.8 1528.1,1131.7 1526.8,1133.2 1525.4,1131.2 1523.9,1134.2 1522.1,1131.9 1520.8,1132.0 1519.1,1131.9 1517.6,1133.5 1516.5,1132.4 1514.8,1131.3 1513.0,1131.7 1511.5,1133.4 1510.3,1133.8 1508.9,1133.8 1507.9,1128.1 1506.5,1129.5 1505.3,1132.3 1503.6,1132.2 1501.9,1131.5 1500.4,1133.1 1498.8,1132.6 1497.3,1132.9 1496.2,1133.7 1494.6,1127.7 1493.3,1133.3 1491.7,1131.7 1490.2,1133.2 1488.9,1131.1 1487.6,1131.8 1486.5,1133.6 1485.1,1132.7 1484.1,1133.6 1482.7,1133.2 1481.5,1130.8 1480.1,1131.8 1478.5,1132.5 1477.1,1132.5 1476.0,1131.5 1474.3,1132.5 1473.3,1131.9 1472.3,1128.3 1470.8,1134.0 1469.3,1131.5 1468.1,1132.4 1466.7,1131.1 1465.7,1131.6 1464.2,1132.4 1462.9,1133.1 1461.9,1127.1 1460.8,1131.2 1459.2,1128.5 1457.6,1133.0 1456.6,1134.5 1455.4,1132.2 1454.0,1132.8 1452.6,1132.4 1451.5,1127.2 1450.3,1132.8 1449.0,1132.7 1447.5,1133.9 1445.9,1131.5 1444.5,1132.9 1442.7,1133.5 1441.2,1130.9 1439.9,1134.0 1438.5,1134.1 1437.4,1133.7 1435.7,1130.7 1434.0,1133.5 1432.8,1134.0 1431.7,1128.6 1430.7,1133.9 1429.6,1127.2 1428.6,1134.2 1426.9,1134.4 1425.6,1133.8 1424.0,1134.6 1422.3,1131.0 1420.8,1130.7 1419.7,1134.0 1418.7,1134.4 1417.5,1133.4 1416.2,1131.5 1415.1,1132.2 1413.8,1125.2 1412.1,1133.9 1410.9,1128.1 1409.6,1132.2 1408.4,1133.0 1406.7,1133.7 1404.9,1132.6 1403.7,1131.0 1402.7,1127.7 1401.7,1136.1 1400.5,1134.5 1399.0,1131.5 1397.7,1135.3 1396.1,1133.5 1394.7,1133.8 1393.4,1131.7 1392.0,1131.9 1390.9,1130.9 1389.1,1130.5 1387.3,1132.9 1386.3,1134.0 1385.0,1134.3 1383.2,1128.8 1381.7,1128.7 1380.6,1131.9 1379.4,1133.4 1377.8,1132.3 1376.3,1131.6 1374.6,1134.3 1372.8,1131.8 1371.4,1132.4 1370.3,1133.6 1368.6,1131.1 1367.2,1131.5 1365.4,1132.2 1364.3,1132.3 1363.2,1130.6 1361.7,1128.8 1360.6,1133.4 1359.2,1132.0 1357.7,1128.8 1356.3,1134.1 1354.7,1132.7 1353.4,1134.6 1352.3,1132.5 1351.1,1132.7 1349.8,1134.4 1348.6,1130.8 1346.9,1134.5 1345.2,1133.7 1343.9,1133.4 1342.8,1131.4 1341.5,1133.2 1339.8,1131.7 1338.4,1133.2 1337.0,1133.4 1335.9,1134.1 1334.2,1131.2 1332.9,1135.3 1331.3,1131.3 1329.8,1130.8 1328.2,1133.6 1326.9,1133.1 1325.4,1132.6 1323.8,1133.5 1322.0,1131.9 1320.3,1134.4 1319.0,1130.6 1317.9,1133.7 1316.6,1132.4 1315.0,1130.0 1313.3,1126.3 1311.7,1131.9 1310.4,1132.1 1308.8,1133.3 1307.6,1133.1 1306.5,1133.3 1304.9,1132.7 1303.5,1134.9 1302.0,1130.8 1300.8,1132.8 1299.2,1128.9 1297.9,1130.8 1296.8,1130.5 1295.5,1132.9 1294.5,1128.3 1292.7,1132.5 1290.9,1132.3 1289.7,1129.1 1288.2,1132.7 1287.1,1132.9 1286.1,1130.7 1284.4,1130.8 1283.3,1133.1 1282.1,1133.5 1280.8,1133.4 1279.8,1131.6 1278.5,1133.9 1277.3,1132.3 1276.1,1126.5 1274.3,1134.5 1272.5,1134.0 1270.8,1134.2 1269.6,1130.2 1268.5,1132.1 1267.2,1133.9 1266.1,1132.5 1265.0,1134.4 1263.7,1125.7 1262.1,1132.4 1260.5,1132.8 1259.3,1133.3 1257.9,1133.7 1256.4,1133.9 1255.3,1131.6 1254.2,1133.8 1252.4,1131.2 1250.7,1131.7 1249.6,1133.8 1247.8,1130.8 1246.8,1131.8 1245.3,1131.2 1243.9,1130.9 1242.9,1126.6 1241.5,1130.8 1239.8,1132.3 1238.1,1131.6 1237.1,1133.7 1235.7,1132.5 1234.1,1132.5 1232.9,1132.3 1231.6,1132.4 1230.4,1130.6 1228.6,1132.9 1227.6,1132.0 1226.4,1134.1 1225.0,1135.4 1223.5,1132.3 1221.8,1133.3 1220.8,1131.6 1219.7,1134.2 1218.2,1128.4 1216.6,1134.3 1214.9,1132.9 1213.6,1133.0 1212.2,1133.4 1210.7,1131.5 1209.2,1133.8 1207.4,1132.1 1205.8,1128.2 1204.6,1133.2 1203.4,1132.1 1202.1,1132.4 1200.8,1132.3 1199.2,1134.0 1197.5,1131.0 1196.1,1134.8 1195.1,1134.7 1193.5,1133.3 1191.8,1133.4 1190.2,1133.4 1188.5,1134.5 1186.8,1133.5 1185.0,1132.1 1183.6,1131.9 1182.4,1132.6 1181.2,1134.4 1179.5,1134.3 1178.2,1133.3 1176.6,1129.4 1175.1,1133.6 1173.4,1131.2 1172.3,1129.6 1171.0,1127.4 1169.4,1133.7 1167.7,1131.3 1166.5,1134.3 1164.8,1133.8 1163.5,1132.4 1162.1,1133.3 1160.6,1130.9 1159.2,1131.2 1158.0,1134.2 1156.7,1132.8 1155.2,1133.0 1154.0,1132.5 1152.8,1131.1 1151.1,1133.9 1149.5,1131.8 1147.8,1127.6 1146.4,1131.0 1145.1,1128.9 1143.4,1133.2 1141.8,1131.9 1140.6,1130.8 1139.0,1132.9 1137.7,1134.0 1136.4,1131.4 1134.8,1131.8 1133.1,1131.5 1131.4,1131.8 1129.9,1132.8 1128.6,1133.8 1127.0,1132.6 1126.0,1132.8 1124.2,1133.2 1122.5,1134.4 1121.3,1134.4 1119.9,1131.3 1118.7,1129.5 1117.3,1128.6 1116.2,1126.5 1115.0,1132.5 1113.6,1132.0 1111.9,1133.4 1110.2,1132.5 1108.8,1131.7 1107.6,1133.9 1106.3,1134.1 1104.9,1131.4 1103.1,1132.7 1101.4,1128.2 1099.6,1132.2 1098.6,1133.4 1097.3,1132.8 1096.0,1131.9 1094.5,1130.9 1093.1,1132.0 1092.0,1132.2 1090.3,1133.0 1089.2,1131.0 1087.6,1130.8 1086.3,1128.6 1084.8,1130.5 1083.6,1135.7 1082.2,1131.5 1080.8,1132.9 1079.6,1130.5 1078.2,1132.4 1076.8,1130.7 1075.6,1132.0 1074.2,1132.8 1072.9,1130.9 1071.2,1131.7 1069.6,1132.6 1068.1,1134.4 1066.4,1132.3 1064.8,1130.9 1063.4,1134.6 1061.7,1130.6 1060.0,1133.0 1058.7,1131.3 1057.4,1129.5 1055.6,1132.9 1054.3,1135.9 1052.7,1130.9 1051.1,1132.2 1049.7,1133.3 1048.5,1129.2 1047.1,1131.6 1046.0,1134.3 1044.3,1131.1 1042.7,1131.3 1041.6,1133.3 1040.1,1131.8 1039.0,1133.0 1037.3,1132.1 1036.0,1132.5 1034.3,1132.5 1032.8,1134.0 1031.6,1136.6 1029.8,1131.4 1028.5,1131.8 1027.4,1132.9 1026.0,1131.4 1024.6,1134.9 1022.9,1133.1 1021.1,1131.8 1020.0,1131.4 1018.9,1134.0 1017.6,1133.5 1016.1,1131.3 1014.8,1131.9 1013.3,1131.4 1011.7,1136.8 1010.4,1133.7 1009.4,1133.5 1008.4,1133.8 1006.6,1133.1 1005.3,1131.3 1004.2,1132.9 1003.1,1131.1 1001.7,1133.5 1000.1,1133.6 998.4,1132.0 997.3,1131.6 995.6,1133.0 993.8,1130.6 992.5,1133.8 991.0,1133.5 989.8,1133.7 988.1,1133.6 987.1,1131.2 985.6,1132.0 984.5,1133.2 982.8,1134.4 981.4,1131.5 979.8,1131.1 978.4,1129.5 977.1,1133.0 975.8,1132.4 974.3,1130.6 972.9,1126.8 971.4,1133.6 970.3,1132.6 969.3,1130.9 967.5,1131.4 965.7,1133.0 964.5,1132.0 963.3,1133.4 961.9,1133.7 960.8,1131.8 959.8,1133.6 958.6,1132.1 957.4,1133.8 955.6,1132.4 954.1,1131.4 952.8,1132.9 951.8,1130.7 950.5,1131.5 948.9,1133.3 947.8,1130.7 946.0,1135.6 945.0,1133.3 943.9,1132.6 942.6,1133.7 941.6,1132.3 940.5,1132.8 939.1,1132.5 937.4,1132.9 935.7,1133.9 934.2,1132.7 932.8,1130.6 931.4,1133.5 930.2,1128.2 929.0,1131.7 927.4,1133.2 925.9,1130.8 924.8,1134.1 923.0,1131.3 921.8,1134.1 920.4,1132.5 919.3,1132.1 918.1,1129.7 916.4,1131.4 914.9,1130.8 913.7,1133.8 912.2,1132.9 911.1,1132.2 909.7,1133.9 908.1,1133.0 906.3,1134.7 904.9,1132.0 903.9,1132.0 902.4,1131.2 900.7,1134.1 899.0,1131.6 897.3,1134.8 895.8,1130.8 894.6,1132.6 893.3,1133.6 891.7,1134.0 890.2,1134.4 888.9,1133.8 887.5,1125.3 886.1,1131.2 885.0,1133.4 883.4,1133.2 882.0,1133.0 881.0,1131.4 879.4,1132.3 877.9,1130.8 876.7,1131.3 875.1,1132.8 874.0,1134.5 872.4,1131.6 870.7,1131.1 869.1,1132.6 867.7,1133.7 865.9,1134.2 864.3,1133.5 863.1,1131.4 861.3,1130.7 860.3,1128.4 859.0,1131.1 857.4,1134.3 855.7,1132.1 854.3,1134.4 852.9,1131.5 851.8,1132.7 850.1,1132.8 848.9,1134.6 847.5,1132.1 846.3,1132.1 844.9,1134.2 843.6,1132.5 842.6,1134.1 841.1,1131.8 839.7,1133.1 838.3,1133.0 836.7,1132.4 835.2,1132.0 834.2,1134.4 832.7,1133.2 831.0,1127.9 829.4,1131.5 828.3,1128.2 826.5,1134.2 825.1,1130.8 823.5,1133.5 822.0,1133.1 820.6,1130.7 819.2,1135.9 817.4,1132.5 816.3,1132.6 815.3,1133.3 813.9,1131.9 812.4,1130.5 810.8,1133.6 809.5,1133.5 807.7,1132.1 806.0,1127.0 804.9,1134.7 803.6,1134.3 801.9,1133.2 800.9,1132.5 799.2,1130.6 797.5,1133.6 795.8,1134.2 794.2,1133.9 792.7,1133.1 791.2,1132.5 789.7,1133.2 788.1,1133.0 786.4,1131.0 784.6,1134.6 783.3,1135.3 781.9,1133.9 780.5,1133.9 779.3,1134.9 777.6,1132.4 776.6,1128.3 775.3,1131.8 773.5,1133.4 772.4,1134.3 771.1,1132.3 770.0,1132.1 768.4,1131.2 767.1,1134.3 765.7,1131.6 764.7,1132.8 763.3,1131.8 762.1,1131.2 760.5,1133.0 758.7,1131.3 757.4,1131.2 756.4,1133.0 755.0,1126.4 753.4,1134.0 751.9,1133.0 750.6,1133.2 749.0,1133.4 747.4,1135.9 746.3,1133.1 745.2,1131.7 743.5,1133.9 742.3,1133.8 740.6,1130.8 738.8,1131.5 737.1,1134.3 735.9,1131.9 734.8,1128.0 733.5,1131.6 732.0,1131.3 730.4,1131.9 728.7,1129.9 727.7,1132.0 726.7,1131.8 724.9,1133.1 723.2,1130.6 722.2,1133.1 720.6,1125.6 719.5,1132.4" fill="#00a3f0" stroke="#00a3f0" stroke-width="0.6" stroke-linejoin="round"/></svg>
<div class="r" style="left:1591.00px;top:1101.00px;width:2.00px;height:389.00px;background:#c8c8c8;border-radius:0px;box-sizing:border-box;"></div>
<svg class="r" style="left:0;top:0" width="2911" height="1662"><circle cx="1592" cy="1114.3" r="8.5" fill="#00a3f5" stroke="#0a0a0a" stroke-width="3.5"/></svg>
<div class="r" style="left:1628.60px;top:1022.30px;width:228.90px;height:131.10px;background:#0a0a0a;border-radius:14px;border:1.5px solid #262626;box-sizing:border-box;"></div>
<div class="r" style="left:1629.60px;top:1088.00px;width:226.90px;height:1.50px;background:#262626;border-radius:0px;box-sizing:border-box;"></div>
<div class="t" style="left:1659.00px;top:1043.04px;font-size:25px;line-height:25px;color:#fafafa;font-weight:400;letter-spacing:0px;font-family:'Liberation Sans', sans-serif;">2162</div>
<div class="r" style="left:1657.80px;top:1118.00px;width:25.00px;height:6.00px;background:#00a3f5;border-radius:3px;box-sizing:border-box;"></div>
<div class="t" style="left:1697.80px;top:1108.64px;font-size:25px;line-height:25px;color:#d4d4d4;font-weight:400;letter-spacing:0px;font-family:'Liberation Sans', sans-serif;">V</div>
<div class="t" style="left:1773.60px;top:1107.28px;font-size:26.6px;line-height:26.6px;color:#fafafa;font-weight:400;letter-spacing:0px;font-family:'Liberation Sans', sans-serif;">3.48</div>
<div class="r" style="left:0.00px;top:1659.50px;width:2911.00px;height:2.50px;background:#3a3a3a;border-radius:0px;box-sizing:border-box;"></div>
<svg class="r" style="left:0;top:1640px" width="24" height="22" viewBox="0 0 24 22"><path d="M0 12 Q2 19.5 14 19.5 L24 19.5 L24 22 L0 22z" fill="#000"/><path d="M0 12 Q2 19.5 14 19.5 L24 19.5" fill="none" stroke="#4a4a4a" stroke-width="1.5"/></svg>
</body></html>
